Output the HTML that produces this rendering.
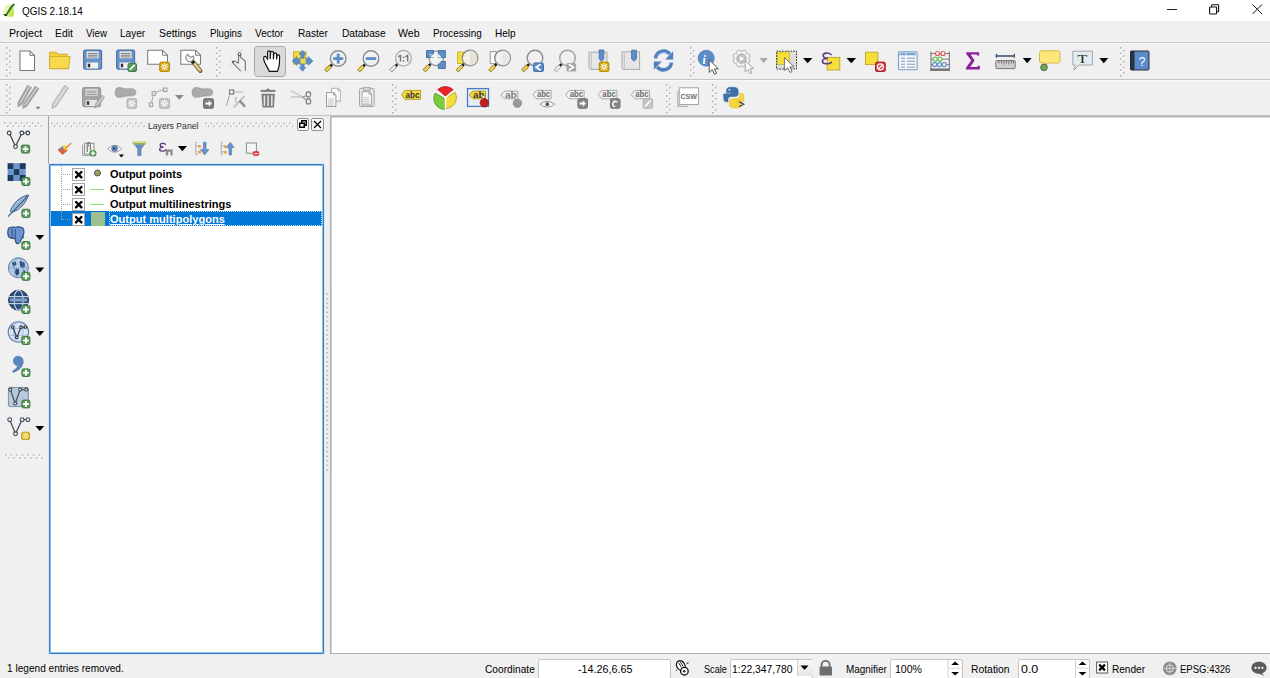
<!DOCTYPE html>
<html><head><meta charset="utf-8"><title>QGIS 2.18.14</title>
<style>
html,body{margin:0;padding:0;}
body{width:1270px;height:678px;overflow:hidden;position:relative;background:#f0f0f0;font-family:"Liberation Sans", sans-serif;}
#root{position:absolute;left:0;top:0;width:1270px;height:678px;overflow:hidden;background:#f0f0f0;}
.a{position:absolute;}
.t{position:absolute;white-space:nowrap;line-height:1;}
svg{overflow:visible}
</style></head><body><div id="root">
<div class="a" style="left:0px;top:0px;width:1270px;height:21px;background:#fff"></div><div class="t" style="left:21.5px;top:5.1px;font-size:11.7px;color:#000;transform:scaleX(0.8507);transform-origin:0 0;">QGIS 2.18.14</div><div class="a" style="left:1167px;top:9px;width:10px;height:1px;background:#222"></div><svg class="a" style="left:1209px;top:4px" width="11" height="11"><rect x="0.6" y="3" width="7" height="7" rx="0.8" fill="none" stroke="#111" stroke-width="1.1"/><path d="M2.6 2.8V1.6Q2.6 0.8 3.4 0.8H8.8Q9.6 0.8 9.6 1.6V7Q9.6 7.8 8.8 7.8H7.8" fill="none" stroke="#111" stroke-width="1.1"/></svg><svg class="a" style="left:1252px;top:4px" width="11" height="11"><path d="M0.5 0.5L10 10M10 0.5L0.5 10" stroke="#111" stroke-width="1"/></svg><div class="a" style="left:0px;top:21px;width:1270px;height:21px;background:#f0f0f0"></div><div class="a" style="left:0px;top:41px;width:1270px;height:1px;background:#f7f7f7"></div><div class="a" style="left:0px;top:42px;width:1270px;height:1px;background:#c4c4c4"></div><div class="a" style="left:0px;top:43px;width:1270px;height:1px;background:#f7f7f7"></div><div class="t" style="left:8.8px;top:27.99px;font-size:11px;color:#000;transform:scaleX(0.9693);transform-origin:0 0;">Project</div><div class="t" style="left:54.7px;top:27.99px;font-size:11px;color:#000;transform:scaleX(0.9384);transform-origin:0 0;">Edit</div><div class="t" style="left:85.6px;top:27.99px;font-size:11px;color:#000;transform:scaleX(0.8877);transform-origin:0 0;">View</div><div class="t" style="left:120.4px;top:27.99px;font-size:11px;color:#000;transform:scaleX(0.9153);transform-origin:0 0;">Layer</div><div class="t" style="left:159.4px;top:27.99px;font-size:11px;color:#000;transform:scaleX(0.9409);transform-origin:0 0;">Settings</div><div class="t" style="left:210px;top:27.99px;font-size:11px;color:#000;transform:scaleX(0.8814);transform-origin:0 0;">Plugins</div><div class="t" style="left:255px;top:27.99px;font-size:11px;color:#000;transform:scaleX(0.9106);transform-origin:0 0;">Vector</div><div class="t" style="left:297.5px;top:27.99px;font-size:11px;color:#000;transform:scaleX(0.9196);transform-origin:0 0;">Raster</div><div class="t" style="left:341.6px;top:27.99px;font-size:11px;color:#000;transform:scaleX(0.9258);transform-origin:0 0;">Database</div><div class="t" style="left:398.2px;top:27.99px;font-size:11px;color:#000;transform:scaleX(0.9589);transform-origin:0 0;">Web</div><div class="t" style="left:433px;top:27.99px;font-size:11px;color:#000;transform:scaleX(0.8949);transform-origin:0 0;">Processing</div><div class="t" style="left:495.2px;top:27.99px;font-size:11px;color:#000;transform:scaleX(0.9061);transform-origin:0 0;">Help</div><div class="a" style="left:0px;top:79px;width:1270px;height:1px;background:#c4c4c4"></div><div class="a" style="left:0px;top:80px;width:1270px;height:1px;background:#f7f7f7"></div><div class="a" style="left:0px;top:115px;width:1270px;height:1px;background:#c4c4c4"></div><div class="a" style="left:330px;top:116px;width:940px;height:538px;background:#fff;border-left:1px solid #b0b0b0;border-top:1px solid #b0b0b0;border-bottom:1px solid #b0b0b0;box-sizing:border-box"></div><div class="a" style="left:331px;top:117px;width:939px;height:1px;background:#dedede"></div><div class="a" style="left:331px;top:117px;width:1px;height:536px;background:#d0d0d0"></div><div class="a" style="left:48px;top:116px;width:1px;height:538px;background:#a0a0a0"></div><div class="t" style="left:148.3px;top:120.77px;font-size:9.6px;color:#333;transform:scaleX(0.9000);transform-origin:0 0;">Layers Panel</div><div class="a" style="left:297px;top:118px;width:10px;height:11px;border:1px solid #909090;border-radius:2px;background:#fafafa"></div><svg class="a" style="left:299px;top:120px" width="8" height="8"><rect x="0.75" y="3.25" width="4.5" height="4" fill="none" stroke="#000" stroke-width="1.5"/><path d="M2.75 3V0.75H7.25V5.25H5.25" fill="none" stroke="#000" stroke-width="1.5"/></svg><div class="a" style="left:310.5px;top:118px;width:11px;height:11px;border:1px solid #909090;border-radius:2px;background:#fafafa"></div><svg class="a" style="left:312.5px;top:120px" width="9" height="9"><path d="M1 1L8 8M8 1L1 8" stroke="#000" stroke-width="1.3"/></svg><div class="a" style="left:49px;top:164px;width:275px;height:490px;box-sizing:border-box;border:1px solid #3a7cb6;box-shadow:inset 0 0 0 1px #8fc0f0, 0 0 0 1px #d6e8fa;background:#fff;border-radius:1px"></div><div class="a" style="left:51px;top:211px;width:271px;height:15px;background:#0078d7"></div><div class="a" style="left:109px;top:211px;width:213px;height:15px;box-sizing:border-box;border:1px dotted #cfe4f8"></div><div class="a" style="left:61px;top:166px;width:0;height:15px;border-left:1px dotted #a0a0a0"></div><div class="a" style="left:61px;top:174px;width:9px;height:0;border-top:1px dotted #a0a0a0"></div><div class="a" style="left:72px;top:168px;width:11px;height:11px;border:1px solid #a4a4a4;background:#fff"></div><svg class="a" style="left:74.5px;top:170.5px" width="8" height="8"><path d="M1 1L6.4 6.4M6.4 1L1 6.4" stroke="#000" stroke-width="2.4" stroke-linecap="round"/></svg><svg class="a" style="left:93px;top:169px" width="9" height="9"><circle cx="4.5" cy="4" r="3" fill="#9aa55a" stroke="#555" stroke-width="1"/></svg><div class="t" style="left:110px;top:169.21px;font-size:10.5px;color:#000;font-weight:bold;transform:scaleX(1.0461);transform-origin:0 0;">Output points</div><div class="a" style="left:61px;top:181px;width:0;height:15px;border-left:1px dotted #a0a0a0"></div><div class="a" style="left:61px;top:189px;width:9px;height:0;border-top:1px dotted #a0a0a0"></div><div class="a" style="left:72px;top:183px;width:11px;height:11px;border:1px solid #a4a4a4;background:#fff"></div><svg class="a" style="left:74.5px;top:185.5px" width="8" height="8"><path d="M1 1L6.4 6.4M6.4 1L1 6.4" stroke="#000" stroke-width="2.4" stroke-linecap="round"/></svg><div class="a" style="left:90px;top:189px;width:14px;height:1px;background:#8fdc7a"></div><div class="t" style="left:110px;top:184.21px;font-size:10.5px;color:#000;font-weight:bold;transform:scaleX(1.0449);transform-origin:0 0;">Output lines</div><div class="a" style="left:61px;top:196px;width:0;height:15px;border-left:1px dotted #a0a0a0"></div><div class="a" style="left:61px;top:204px;width:9px;height:0;border-top:1px dotted #a0a0a0"></div><div class="a" style="left:72px;top:198px;width:11px;height:11px;border:1px solid #a4a4a4;background:#fff"></div><svg class="a" style="left:74.5px;top:200.5px" width="8" height="8"><path d="M1 1L6.4 6.4M6.4 1L1 6.4" stroke="#000" stroke-width="2.4" stroke-linecap="round"/></svg><div class="a" style="left:90px;top:204px;width:14px;height:1px;background:#8fdc7a"></div><div class="t" style="left:110px;top:199.21px;font-size:10.5px;color:#000;font-weight:bold;transform:scaleX(1.0511);transform-origin:0 0;">Output multilinestrings</div><div class="a" style="left:61px;top:211px;width:0;height:8px;border-left:1px dotted #a0a0a0"></div><div class="a" style="left:61px;top:219px;width:9px;height:0;border-top:1px dotted #a0a0a0"></div><div class="a" style="left:72px;top:213px;width:11px;height:11px;border:1px solid #a4a4a4;background:#fff"></div><svg class="a" style="left:74.5px;top:215.5px" width="8" height="8"><path d="M1 1L6.4 6.4M6.4 1L1 6.4" stroke="#000" stroke-width="2.4" stroke-linecap="round"/></svg><div class="a" style="left:91px;top:212px;width:14px;height:14px;background:#9ec08e"></div><div class="t" style="left:110px;top:214.21px;font-size:10.5px;color:#fff;font-weight:bold;transform:scaleX(1.0525);transform-origin:0 0;text-decoration:underline;">Output multipolygons</div><div class="t" style="left:6.6px;top:663.09px;font-size:11px;color:#000;transform:scaleX(0.9183);transform-origin:0 0;">1 legend entries removed.</div><div class="t" style="left:485px;top:663.99px;font-size:11px;color:#000;transform:scaleX(0.9252);transform-origin:0 0;">Coordinate</div><div class="a" style="left:538px;top:659px;width:133px;height:20px;box-sizing:border-box;border:1px solid #c4c4c4;border-radius:2px;background:#fff"></div><div class="t" style="left:578px;top:663.99px;font-size:11px;color:#000;transform:scaleX(0.9774);transform-origin:0 0;">-14.26,6.65</div><div class="t" style="left:704px;top:663.99px;font-size:11px;color:#000;transform:scaleX(0.8281);transform-origin:0 0;">Scale</div><div class="a" style="left:730px;top:659px;width:83px;height:20px;box-sizing:border-box;border:1px solid #c4c4c4;border-radius:2px;background:#fff"></div><div class="a" style="left:797px;top:660px;width:15px;height:16px;background:linear-gradient(#f8f8f8,#e6e6e6);border-left:1px solid #d0d0d0"></div><svg class="a" style="left:800px;top:665px" width="9" height="6"><path d="M0.5 0.5H8.5L4.5 5z" fill="#000"/></svg><div class="t" style="left:732.4px;top:663.99px;font-size:11px;color:#000;transform:scaleX(0.9403);transform-origin:0 0;">1:22,347,780</div><div class="t" style="left:845.8px;top:663.99px;font-size:11px;color:#000;transform:scaleX(0.9017);transform-origin:0 0;">Magnifier</div><div class="a" style="left:890px;top:659px;width:73px;height:20px;box-sizing:border-box;border:1px solid #c4c4c4;border-radius:2px;background:#fff"></div><div class="t" style="left:894.8px;top:663.99px;font-size:11px;color:#000;transform:scaleX(0.9595);transform-origin:0 0;">100%</div><div class="t" style="left:970.7px;top:663.99px;font-size:11px;color:#000;transform:scaleX(0.9418);transform-origin:0 0;">Rotation</div><div class="a" style="left:1018px;top:659px;width:72px;height:20px;box-sizing:border-box;border:1px solid #c4c4c4;border-radius:2px;background:#fff"></div><div class="t" style="left:1021px;top:663.99px;font-size:11px;color:#000;transform:scaleX(1.1309);transform-origin:0 0;">0.0</div><div class="t" style="left:1111.8px;top:663.99px;font-size:11px;color:#000;transform:scaleX(0.9147);transform-origin:0 0;">Render</div><div class="t" style="left:1180px;top:663.99px;font-size:11px;color:#000;transform:scaleX(0.8676);transform-origin:0 0;">EPSG:4326</div><svg class="a" style="left:0;top:0;pointer-events:none" width="1270" height="678" viewBox="0 0 1270 678"><rect x="6.8" y="47.8" width="1.6" height="1.6" fill="#ffffff"/><rect x="6" y="47" width="1.6" height="1.6" fill="#b2b2b2"/><rect x="9.8" y="50.599999999999994" width="1.6" height="1.6" fill="#ffffff"/><rect x="9" y="49.8" width="1.6" height="1.6" fill="#b2b2b2"/><rect x="6.8" y="53.39999999999999" width="1.6" height="1.6" fill="#ffffff"/><rect x="6" y="52.599999999999994" width="1.6" height="1.6" fill="#b2b2b2"/><rect x="9.8" y="56.19999999999999" width="1.6" height="1.6" fill="#ffffff"/><rect x="9" y="55.39999999999999" width="1.6" height="1.6" fill="#b2b2b2"/><rect x="6.8" y="58.999999999999986" width="1.6" height="1.6" fill="#ffffff"/><rect x="6" y="58.19999999999999" width="1.6" height="1.6" fill="#b2b2b2"/><rect x="9.8" y="61.79999999999998" width="1.6" height="1.6" fill="#ffffff"/><rect x="9" y="60.999999999999986" width="1.6" height="1.6" fill="#b2b2b2"/><rect x="6.8" y="64.59999999999998" width="1.6" height="1.6" fill="#ffffff"/><rect x="6" y="63.79999999999998" width="1.6" height="1.6" fill="#b2b2b2"/><rect x="9.8" y="67.39999999999998" width="1.6" height="1.6" fill="#ffffff"/><rect x="9" y="66.59999999999998" width="1.6" height="1.6" fill="#b2b2b2"/><rect x="6.8" y="70.19999999999997" width="1.6" height="1.6" fill="#ffffff"/><rect x="6" y="69.39999999999998" width="1.6" height="1.6" fill="#b2b2b2"/><rect x="9.8" y="72.99999999999997" width="1.6" height="1.6" fill="#ffffff"/><rect x="9" y="72.19999999999997" width="1.6" height="1.6" fill="#b2b2b2"/><rect x="6.8" y="75.79999999999997" width="1.6" height="1.6" fill="#ffffff"/><rect x="6" y="74.99999999999997" width="1.6" height="1.6" fill="#b2b2b2"/><path d="M20.0 50.9H30L34.5 55.4V70.5H20.0Z" fill="#fff" stroke="#767676" stroke-width="1.05"/><path d="M30 50.9V55.4H34.5" fill="none" stroke="#767676" stroke-width="1"/><path d="M49.5 52.2H56.5L58.2 54.2H67.5V57H49.5Z" fill="#f2cf3c" stroke="#d1ad2e" stroke-width="1"/><path d="M49.5 56.5H70L68.5 68.6H49.5Z" fill="#f9d94c" stroke="#d4b030" stroke-width="1.1"/><rect x="83.6" y="50.1" width="18" height="19" rx="2" fill="#6893c8" stroke="#4a70a4" stroke-width="1.1"/><rect x="86.6" y="51.3" width="12" height="7" fill="#e4e4e4"/><rect x="87.8" y="53.1" width="9.6" height="0.9" fill="#777"/><rect x="87.8" y="54.8" width="9.6" height="0.9" fill="#777"/><rect x="87.8" y="56.5" width="9.6" height="0.9" fill="#777"/><rect x="86.6" y="62.5" width="11.5" height="6" fill="#f2f2f2"/><rect x="87.8" y="63.7" width="2.4" height="3.6" fill="#333"/><rect x="116.6" y="50.1" width="18" height="19" rx="2" fill="#6893c8" stroke="#4a70a4" stroke-width="1.1"/><rect x="119.6" y="51.3" width="12" height="7" fill="#e4e4e4"/><rect x="120.8" y="53.1" width="9.6" height="0.9" fill="#777"/><rect x="120.8" y="54.8" width="9.6" height="0.9" fill="#777"/><rect x="120.8" y="56.5" width="9.6" height="0.9" fill="#777"/><rect x="119.6" y="62.5" width="11.5" height="6" fill="#f2f2f2"/><rect x="120.8" y="63.7" width="2.4" height="3.6" fill="#333"/><rect x="128.0" y="63.3" width="8.5" height="8.2" rx="1.5" fill="#5b9a5e" stroke="#3f7a44" stroke-width="1"/><line x1="129.8" y1="69.6" x2="134.8" y2="64.8" stroke="#fff" stroke-width="1.6"/><path d="M147.7 50.2H162.5L167.5 55.2V64.3H147.7Z" fill="#fff" stroke="#7a7a7a" stroke-width="1.05"/><path d="M162.5 50.2V55.2H167.5" fill="none" stroke="#7a7a7a" stroke-width="1"/><rect x="159.7" y="62.1" width="9.8" height="9.4" rx="1.5" fill="#d6a914" stroke="#b48b06" stroke-width="1"/><circle cx="164.6" cy="66.8" r="1.61" fill="none" stroke="#fff" stroke-width="1.2"/><line x1="167.07" y1="66.80" x2="168.24" y2="66.80" stroke="#fff" stroke-width="1.1"/><line x1="166.35" y1="68.55" x2="167.17" y2="69.37" stroke="#fff" stroke-width="1.1"/><line x1="164.60" y1="69.27" x2="164.60" y2="70.44" stroke="#fff" stroke-width="1.1"/><line x1="162.85" y1="68.55" x2="162.03" y2="69.37" stroke="#fff" stroke-width="1.1"/><line x1="162.13" y1="66.80" x2="160.96" y2="66.80" stroke="#fff" stroke-width="1.1"/><line x1="162.85" y1="65.05" x2="162.03" y2="64.23" stroke="#fff" stroke-width="1.1"/><line x1="164.60" y1="64.33" x2="164.60" y2="63.16" stroke="#fff" stroke-width="1.1"/><line x1="166.35" y1="65.05" x2="167.17" y2="64.23" stroke="#fff" stroke-width="1.1"/><path d="M180.8 50.2H195.5L200.5 55.2V64.3H180.8Z" fill="#fff" stroke="#7a7a7a" stroke-width="1.05"/><path d="M195.5 50.2V55.2H200.5" fill="none" stroke="#7a7a7a" stroke-width="1"/><line x1="193.4" y1="62.4" x2="200.4" y2="70.8" stroke="#6a5e2a" stroke-width="4.2" stroke-linecap="round"/><line x1="193.8" y1="62.9" x2="200" y2="70.3" stroke="#e4d28a" stroke-width="2.5" stroke-linecap="round"/><line x1="191.6" y1="60.2" x2="194" y2="63.2" stroke="#222" stroke-width="3.4"/><path d="M187.8 54.4A3.9 3.9 0 1 0 193.3 56L191.2 57.2L189.4 56.4Z" fill="#f2f2f2" stroke="#8a8a8a" stroke-width="1.1" stroke-linejoin="round"/><rect x="216.8" y="47.8" width="1.6" height="1.6" fill="#ffffff"/><rect x="216" y="47" width="1.6" height="1.6" fill="#b2b2b2"/><rect x="219.8" y="50.599999999999994" width="1.6" height="1.6" fill="#ffffff"/><rect x="219" y="49.8" width="1.6" height="1.6" fill="#b2b2b2"/><rect x="216.8" y="53.39999999999999" width="1.6" height="1.6" fill="#ffffff"/><rect x="216" y="52.599999999999994" width="1.6" height="1.6" fill="#b2b2b2"/><rect x="219.8" y="56.19999999999999" width="1.6" height="1.6" fill="#ffffff"/><rect x="219" y="55.39999999999999" width="1.6" height="1.6" fill="#b2b2b2"/><rect x="216.8" y="58.999999999999986" width="1.6" height="1.6" fill="#ffffff"/><rect x="216" y="58.19999999999999" width="1.6" height="1.6" fill="#b2b2b2"/><rect x="219.8" y="61.79999999999998" width="1.6" height="1.6" fill="#ffffff"/><rect x="219" y="60.999999999999986" width="1.6" height="1.6" fill="#b2b2b2"/><rect x="216.8" y="64.59999999999998" width="1.6" height="1.6" fill="#ffffff"/><rect x="216" y="63.79999999999998" width="1.6" height="1.6" fill="#b2b2b2"/><rect x="219.8" y="67.39999999999998" width="1.6" height="1.6" fill="#ffffff"/><rect x="219" y="66.59999999999998" width="1.6" height="1.6" fill="#b2b2b2"/><rect x="216.8" y="70.19999999999997" width="1.6" height="1.6" fill="#ffffff"/><rect x="216" y="69.39999999999998" width="1.6" height="1.6" fill="#b2b2b2"/><rect x="219.8" y="72.99999999999997" width="1.6" height="1.6" fill="#ffffff"/><rect x="219" y="72.19999999999997" width="1.6" height="1.6" fill="#b2b2b2"/><rect x="216.8" y="75.79999999999997" width="1.6" height="1.6" fill="#ffffff"/><rect x="216" y="74.99999999999997" width="1.6" height="1.6" fill="#b2b2b2"/><path d="M240.8 71.2L234 64.2Q231.8 62 233.4 61.2Q234.4 60.8 236 61.8L238.4 63.2L238.6 54.8" fill="none" stroke="#7a7a7a" stroke-width="1.2" stroke-linejoin="round"/><path d="M240.6 55.2V57.6L244.4 60.2Q245.4 61 245.4 62.6V70.8" fill="none" stroke="#7a7a7a" stroke-width="1.2" stroke-linejoin="round"/><circle cx="239.5" cy="54.2" r="1.4" fill="#fff" stroke="#555" stroke-width="1.1"/><circle cx="232.8" cy="61.8" r="1.1" fill="#555"/><path d="M240.8 51L241.8 49.6M236.6 51.6L236 50.6M230.8 64.6L230 65.6" stroke="#b0b0b0" stroke-width="0.8"/><rect x="254.5" y="46.5" width="31" height="30" rx="3" fill="#dadada" stroke="#a8a8a8" stroke-width="1"/><path d="M269.4 71.4L265 63C263.6 60 263 57.6 264.4 56.6C265.6 55.8 266.8 57.2 267.6 59.4L267.6 52.2C267.6 50.4 270.2 50.4 270.2 52.2L270.2 58.6L270.6 52.8C270.8 51 273.2 51 273.4 52.8L273.4 58.8L273.8 54C274 52.4 276.4 52.4 276.6 54.2L276.6 59L277 56.2C277.2 54.4 279.6 54.6 279.6 56.4L279.4 64C279.2 67 278.2 69.2 277.4 71.4Z" fill="#fff" stroke="#111" stroke-width="1.2" stroke-linejoin="round"/><rect x="293.5" y="51.8" width="12.5" height="12.2" fill="#f5dc3c" stroke="#c9ad2a" stroke-width="1"/><path d="M302.5 50.3L306 54.3H304.1V58.4H308.2V56.5L313 61L308.2 65.5V63.6H304.1V67.3H306L302.5 71.3L299 67.3H300.9V63.6H296.8V65.5L292 61L296.8 56.5V58.4H300.9V54.3H299Z" fill="#5b8dc9" stroke="#4e7cb6" stroke-width="0.6"/><rect x="300.5" y="58.6" width="5.2" height="5" fill="#f5dc3c"/><line x1="330.36034076151907" y1="66.21620003787493" x2="325.5" y2="71" stroke="#8a7a20" stroke-width="3.8" stroke-linecap="butt"/><line x1="330.36034076151907" y1="66.21620003787493" x2="325.9276177766444" y2="70.57911636157046" stroke="#f7dc4a" stroke-width="2.2" stroke-linecap="butt"/><line x1="332.14208149753745" y1="64.46251821108517" x2="330.36034076151907" y2="66.21620003787493" stroke="#222" stroke-width="2.6"/><circle cx="338.2" cy="58.5" r="7.8" fill="#f0f0f0" stroke="#8c8c8c" stroke-width="1.4"/><rect x="333.2" y="57.2" width="10" height="2.8" fill="#5b8dc9"/><rect x="336.8" y="53.6" width="2.8" height="10" fill="#5b8dc9"/><line x1="363.22182540694797" y1="66.27817459305203" x2="358.5" y2="71" stroke="#8a7a20" stroke-width="3.8" stroke-linecap="butt"/><line x1="363.22182540694797" y1="66.27817459305203" x2="358.9242640687119" y2="70.57573593128807" stroke="#f7dc4a" stroke-width="2.2" stroke-linecap="butt"/><line x1="364.98959235991435" y1="64.51040764008566" x2="363.22182540694797" y2="66.27817459305203" stroke="#222" stroke-width="2.6"/><circle cx="371" cy="58.5" r="7.8" fill="#f0f0f0" stroke="#8c8c8c" stroke-width="1.4"/><rect x="365.8" y="57.2" width="10.4" height="2.8" fill="#5b8dc9"/><line x1="395.6315656624729" y1="65.98685508358419" x2="390.5" y2="71" stroke="#8e8e8e" stroke-width="3.8" stroke-linecap="butt"/><line x1="395.6315656624729" y1="65.98685508358419" x2="390.9291873275015" y2="70.58071699544087" stroke="#f4f4f4" stroke-width="2.2" stroke-linecap="butt"/><line x1="397.41984619372903" y1="64.23984256458778" x2="395.6315656624729" y2="65.98685508358419" stroke="#222" stroke-width="2.6"/><circle cx="403.5" cy="58.3" r="7.8" fill="#f0f0f0" stroke="#b0b0b0" stroke-width="1.4"/><path d="M398 56.2L400 54.8H401.2V61.6H399.8V56.8L398.4 57.6Z" fill="#707070"/><rect x="402.8" y="56.6" width="1.5" height="1.5" fill="#707070"/><rect x="402.8" y="60.1" width="1.5" height="1.5" fill="#707070"/><path d="M405.2 56.2L407.2 54.8H408.4V61.6H407V56.8L405.6 57.6Z" fill="#707070"/><line x1="429.0056324016172" y1="65.71297520160853" x2="424" y2="70.8" stroke="#8a7a20" stroke-width="3.8" stroke-linecap="butt"/><line x1="429.0056324016172" y1="65.71297520160853" x2="424.4208288999067" y2="70.37232835375335" stroke="#f7dc4a" stroke-width="2.2" stroke-linecap="butt"/><line x1="430.7590861512285" y1="63.93101000891417" x2="429.0056324016172" y2="65.71297520160853" stroke="#222" stroke-width="2.6"/><circle cx="436.3" cy="58.3" r="7.2" fill="#f4f4f4" stroke="#9a9a9a" stroke-width="1.4"/><rect x="426.5" y="50.6" width="7" height="7" fill="#5f8dc6" stroke="#3f6ba4" stroke-width="0.9"/><rect x="438.3" y="50.6" width="7" height="7" fill="#5f8dc6" stroke="#3f6ba4" stroke-width="0.9"/><rect x="438.3" y="61.4" width="7" height="7" fill="#5f8dc6" stroke="#3f6ba4" stroke-width="0.9"/><path d="M434 53.6V57.6H430Z" fill="#f4f4f4"/><path d="M429.4 54.4L433 55.6" stroke="#f4f4f4" stroke-width="0.8"/><path d="M437.8 53.6V57.6H441.8Z" fill="#f4f4f4"/><path d="M437.8 64.6V60.6H441.8Z" fill="#f4f4f4"/><rect x="457.5" y="52" width="6" height="11.5" fill="#f3df3a" stroke="#c4aa28" stroke-width="0.8"/><line x1="462.22182540694797" y1="65.77817459305203" x2="457" y2="71" stroke="#8a7a20" stroke-width="3.8" stroke-linecap="butt"/><line x1="462.22182540694797" y1="65.77817459305203" x2="457.4242640687119" y2="70.57573593128807" stroke="#f7dc4a" stroke-width="2.2" stroke-linecap="butt"/><line x1="463.98959235991435" y1="64.01040764008566" x2="462.22182540694797" y2="65.77817459305203" stroke="#222" stroke-width="2.6"/><circle cx="470" cy="58" r="7.8" fill="#f2f0e6" stroke="#8c8c8c" stroke-width="1.4"/><path d="M470 50.6A7.4 7.4 0 0 1 470 65.4Z" fill="#e4e2d8"/><rect x="490.2" y="51.6" width="6" height="12" fill="#fafafa" stroke="#9a9a9a" stroke-width="1"/><line x1="494.79208128070564" y1="65.74831628632263" x2="489.5" y2="71" stroke="#8a7a20" stroke-width="3.8" stroke-linecap="butt"/><line x1="494.79208128070564" y1="65.74831628632263" x2="489.92588647559785" y2="70.57736456620059" stroke="#f7dc4a" stroke-width="2.2" stroke-linecap="butt"/><line x1="496.56660826236345" y1="63.9873353121584" x2="494.79208128070564" y2="65.74831628632263" stroke="#222" stroke-width="2.6"/><circle cx="502.6" cy="58" r="7.8" fill="#f0f0f0" stroke="#8c8c8c" stroke-width="1.4"/><path d="M502.6 50.6A7.4 7.4 0 0 1 502.6 65.4Z" fill="#e6e6e6"/><line x1="527.3758041212303" y1="65.92916371392042" x2="522.5" y2="71" stroke="#8a7a20" stroke-width="3.8" stroke-linecap="butt"/><line x1="527.3758041212303" y1="65.92916371392042" x2="522.915865229751" y2="70.56750016105889" stroke="#f7dc4a" stroke-width="2.2" stroke-linecap="butt"/><line x1="529.1085759118598" y1="64.12708105166577" x2="527.3758041212303" y2="65.92916371392042" stroke="#222" stroke-width="2.6"/><circle cx="535" cy="58" r="7.8" fill="#f0f0f0" stroke="#8c8c8c" stroke-width="1.4"/><rect x="533.5" y="62.9" width="10" height="8.6" rx="1.5" fill="#5b8bc8" stroke="#4673ad" stroke-width="1"/><path d="M540.6 64.2L536 67.2L540.6 70.2" fill="none" stroke="#fff" stroke-width="1.7"/><line x1="559.8758041212303" y1="65.92916371392042" x2="555" y2="71" stroke="#a0a0a0" stroke-width="3.8" stroke-linecap="butt"/><line x1="559.8758041212303" y1="65.92916371392042" x2="555.415865229751" y2="70.56750016105889" stroke="#f4f4f4" stroke-width="2.2" stroke-linecap="butt"/><line x1="561.6085759118598" y1="64.12708105166577" x2="559.8758041212303" y2="65.92916371392042" stroke="#222" stroke-width="2.6"/><circle cx="567.5" cy="58" r="7.8" fill="#f0f0f0" stroke="#a0a0a0" stroke-width="1.4"/><rect x="566.5" y="62.9" width="9.6" height="8.6" rx="1.5" fill="#a6a6a6"/><path d="M568.8 64.2L573.4 67.2L568.8 70.2" fill="none" stroke="#fff" stroke-width="1.7"/><path d="M589 52.2H607V69.4H591A2 2 0 0 1 589 67.4Z" fill="#e6e6e6" stroke="#a8a8a8" stroke-width="1"/><path d="M591.4 52.2V69.4" stroke="#c8c8c8" stroke-width="1.2"/><path d="M599.2 50H603.8V59L601.5 61.2L599.2 59Z" fill="#5b8dc9" stroke="#3f6aa6" stroke-width="0.8"/><rect x="599.3" y="62.1" width="9.6" height="9.4" rx="1.5" fill="#d6a914" stroke="#b48b06" stroke-width="1"/><circle cx="604.1" cy="66.8" r="1.61" fill="none" stroke="#fff" stroke-width="1.2"/><line x1="606.57" y1="66.80" x2="607.74" y2="66.80" stroke="#fff" stroke-width="1.1"/><line x1="605.85" y1="68.55" x2="606.67" y2="69.37" stroke="#fff" stroke-width="1.1"/><line x1="604.10" y1="69.27" x2="604.10" y2="70.44" stroke="#fff" stroke-width="1.1"/><line x1="602.35" y1="68.55" x2="601.53" y2="69.37" stroke="#fff" stroke-width="1.1"/><line x1="601.63" y1="66.80" x2="600.46" y2="66.80" stroke="#fff" stroke-width="1.1"/><line x1="602.35" y1="65.05" x2="601.53" y2="64.23" stroke="#fff" stroke-width="1.1"/><line x1="604.10" y1="64.33" x2="604.10" y2="63.16" stroke="#fff" stroke-width="1.1"/><line x1="605.85" y1="65.05" x2="606.67" y2="64.23" stroke="#fff" stroke-width="1.1"/><path d="M622 51.8H639.6V69.4H624A2 2 0 0 1 622 67.4Z" fill="#e6e6e6" stroke="#a8a8a8" stroke-width="1"/><path d="M624.4 51.8V69.4" stroke="#c8c8c8" stroke-width="1.2"/><path d="M631.6 50.2H636.4V59L634 61.2L631.6 59Z" fill="#5b8dc9" stroke="#3f6aa6" stroke-width="0.8"/><path d="M655.6 58.4A8 8 0 0 1 669.8 54.2" fill="none" stroke="#4f7fbd" stroke-width="3.6"/><path d="M673.2 51.2V59.6H665.2Z" fill="#4f7fbd"/><path d="M671.4 62.6A8 8 0 0 1 657.2 66.8" fill="none" stroke="#4f7fbd" stroke-width="3.6"/><path d="M653.8 69.8V61.4H661.8Z" fill="#4f7fbd"/><path d="M657 57.6A6.6 6.6 0 0 1 668.6 54.8" fill="none" stroke="#8fb2df" stroke-width="1"/><rect x="690.8" y="47.8" width="1.6" height="1.6" fill="#ffffff"/><rect x="690" y="47" width="1.6" height="1.6" fill="#b2b2b2"/><rect x="693.8" y="50.599999999999994" width="1.6" height="1.6" fill="#ffffff"/><rect x="693" y="49.8" width="1.6" height="1.6" fill="#b2b2b2"/><rect x="690.8" y="53.39999999999999" width="1.6" height="1.6" fill="#ffffff"/><rect x="690" y="52.599999999999994" width="1.6" height="1.6" fill="#b2b2b2"/><rect x="693.8" y="56.19999999999999" width="1.6" height="1.6" fill="#ffffff"/><rect x="693" y="55.39999999999999" width="1.6" height="1.6" fill="#b2b2b2"/><rect x="690.8" y="58.999999999999986" width="1.6" height="1.6" fill="#ffffff"/><rect x="690" y="58.19999999999999" width="1.6" height="1.6" fill="#b2b2b2"/><rect x="693.8" y="61.79999999999998" width="1.6" height="1.6" fill="#ffffff"/><rect x="693" y="60.999999999999986" width="1.6" height="1.6" fill="#b2b2b2"/><rect x="690.8" y="64.59999999999998" width="1.6" height="1.6" fill="#ffffff"/><rect x="690" y="63.79999999999998" width="1.6" height="1.6" fill="#b2b2b2"/><rect x="693.8" y="67.39999999999998" width="1.6" height="1.6" fill="#ffffff"/><rect x="693" y="66.59999999999998" width="1.6" height="1.6" fill="#b2b2b2"/><rect x="690.8" y="70.19999999999997" width="1.6" height="1.6" fill="#ffffff"/><rect x="690" y="69.39999999999998" width="1.6" height="1.6" fill="#b2b2b2"/><rect x="693.8" y="72.99999999999997" width="1.6" height="1.6" fill="#ffffff"/><rect x="693" y="72.19999999999997" width="1.6" height="1.6" fill="#b2b2b2"/><rect x="690.8" y="75.79999999999997" width="1.6" height="1.6" fill="#ffffff"/><rect x="690" y="74.99999999999997" width="1.6" height="1.6" fill="#b2b2b2"/><circle cx="706.2" cy="58.2" r="8" fill="#5b8dc9" stroke="#4a78b4" stroke-width="0.8"/><text x="702.6" y="63.5" font-family="Liberation Serif" font-style="italic" font-weight="bold" font-size="12" fill="#fff">i</text><polygon points="709.20,59.80 709.20,72.45 712.19,69.69 714.49,74.29 716.56,73.37 714.38,68.88 718.40,68.77" fill="#fff" stroke="#444" stroke-width="0.9" stroke-linejoin="round"/><circle cx="747.41" cy="61.05" r="2.5" fill="#f2f2f2" stroke="#b4b4b4" stroke-width="1"/><circle cx="743.95" cy="64.51" r="2.5" fill="#f2f2f2" stroke="#b4b4b4" stroke-width="1"/><circle cx="739.05" cy="64.51" r="2.5" fill="#f2f2f2" stroke="#b4b4b4" stroke-width="1"/><circle cx="735.59" cy="61.05" r="2.5" fill="#f2f2f2" stroke="#b4b4b4" stroke-width="1"/><circle cx="735.59" cy="56.15" r="2.5" fill="#f2f2f2" stroke="#b4b4b4" stroke-width="1"/><circle cx="739.05" cy="52.69" r="2.5" fill="#f2f2f2" stroke="#b4b4b4" stroke-width="1"/><circle cx="743.95" cy="52.69" r="2.5" fill="#f2f2f2" stroke="#b4b4b4" stroke-width="1"/><circle cx="747.41" cy="56.15" r="2.5" fill="#f2f2f2" stroke="#b4b4b4" stroke-width="1"/><circle cx="741.5" cy="58.6" r="6.6" fill="#f2f2f2"/><circle cx="741.5" cy="58.6" r="4.6" fill="#c4c4c4" stroke="#a8a8a8" stroke-width="1"/><path d="M740 56.2L744.2 58.6L740 61Z" fill="#fff"/><polygon points="745.20,60.40 745.20,71.95 747.93,69.43 750.03,73.63 751.92,72.79 749.93,68.69 753.60,68.59" fill="#fafafa" stroke="#9a9a9a" stroke-width="0.9" stroke-linejoin="round"/><path d="M759.4 58H768.0L763.6999999999999 63Z" fill="#a8a8a8"/><rect x="776.5" y="51.2" width="20" height="17.8" fill="#dedede" stroke="#333" stroke-width="1" stroke-dasharray="1.6 1.2"/><rect x="777.2" y="52" width="12.5" height="12.4" fill="#f5de36" stroke="#b9a32a" stroke-width="0.6"/><polygon points="784.40,57.40 784.40,70.60 787.52,67.72 789.92,72.52 792.08,71.56 789.80,66.88 794.00,66.76" fill="#fff" stroke="#666" stroke-width="0.9" stroke-linejoin="round"/><path d="M803 58H812.4L807.7 63.2Z" fill="#000"/><rect x="827.2" y="57.4" width="12.6" height="12.6" fill="#f7df3a" stroke="#bca22e" stroke-width="0.9"/><path d="M846.5 58H856.1L851.3 63.2Z" fill="#000"/><rect x="865.5" y="52.2" width="12.4" height="12.4" fill="#f7df3a" stroke="#bfa52c" stroke-width="0.9"/><rect x="875.5" y="62.1" width="9.8" height="9.4" rx="1.5" fill="#d83a3a" stroke="#a82626" stroke-width="1"/><circle cx="880.4" cy="66.8" r="3" fill="none" stroke="#fff" stroke-width="1.3"/><line x1="878.2" y1="69" x2="882.6" y2="64.6" stroke="#fff" stroke-width="1.3"/><rect x="898.5" y="51.8" width="18.6" height="18" rx="1" fill="#f4f8fc" stroke="#7c9ec4" stroke-width="1.1"/><rect x="899" y="52.3" width="17.6" height="3.2" fill="#a9c9ec"/><rect x="901" y="53.5" width="4" height="1" fill="#5580b0"/><rect x="907" y="53.5" width="8" height="1" fill="#5580b0"/><rect x="901" y="57.7" width="4" height="1" fill="#7d96b4"/><rect x="907" y="57.7" width="8" height="1" fill="#7d96b4"/><rect x="901" y="60.7" width="4" height="1" fill="#7d96b4"/><rect x="907" y="60.7" width="8" height="1" fill="#7d96b4"/><rect x="901" y="63.7" width="4" height="1" fill="#7d96b4"/><rect x="907" y="63.7" width="8" height="1" fill="#7d96b4"/><rect x="901" y="66.7" width="4" height="1" fill="#7d96b4"/><rect x="907" y="66.7" width="8" height="1" fill="#7d96b4"/><path d="M931 51.5V69.4M949.3 51.5V69.4" stroke="#777" stroke-width="1.1"/><rect x="930.2" y="68.4" width="19.8" height="2.6" fill="#777"/><line x1="931" y1="53.5" x2="949.5" y2="53.5" stroke="#666" stroke-width="0.8"/><circle cx="937.5" cy="53.5" r="2" fill="#fff" stroke="#e05757" stroke-width="1.2"/><circle cx="943" cy="53.5" r="2" fill="#fff" stroke="#e05757" stroke-width="1.2"/><line x1="931" y1="59.2" x2="949.5" y2="59.2" stroke="#666" stroke-width="0.8"/><circle cx="935.2" cy="59.2" r="2" fill="#fff" stroke="#6bbf5a" stroke-width="1.2"/><circle cx="940" cy="59.2" r="2" fill="#fff" stroke="#6bbf5a" stroke-width="1.2"/><line x1="931" y1="64.6" x2="949.5" y2="64.6" stroke="#666" stroke-width="0.8"/><circle cx="934.6" cy="64.6" r="2" fill="#fff" stroke="#5a8fc8" stroke-width="1.2"/><circle cx="939.4" cy="64.6" r="2" fill="#fff" stroke="#5a8fc8" stroke-width="1.2"/><circle cx="944.2" cy="64.6" r="2" fill="#fff" stroke="#5a8fc8" stroke-width="1.2"/><path d="M966.2 52.2H979.2V55.4H977.2L976.8 54.6H970.6L974.6 60.5L970.2 67H977.2L977.8 65.8H979.8V69.6H966V67.8L971.2 60.6L966.2 53.8Z" fill="#8e1d9c"/><rect x="995.8" y="55.2" width="19.2" height="1.6" fill="#3f5670"/><rect x="995.8" y="53.8" width="1.3" height="4" fill="#3f5670"/><rect x="1013.7" y="53.8" width="1.3" height="4" fill="#3f5670"/><rect x="995.8" y="60.6" width="19.4" height="8" rx="1" fill="#cfcfcf" stroke="#777" stroke-width="1"/><rect x="998.5" y="61" width="0.9" height="2.4" fill="#666"/><rect x="1001" y="61" width="0.9" height="2.4" fill="#666"/><rect x="1003.5" y="61" width="0.9" height="3.5" fill="#666"/><rect x="1006" y="61" width="0.9" height="2.4" fill="#666"/><rect x="1008.5" y="61" width="0.9" height="3.5" fill="#666"/><rect x="1011" y="61" width="0.9" height="2.4" fill="#666"/><rect x="1013" y="61" width="0.9" height="2.4" fill="#666"/><path d="M1022.8 58H1031.6L1027.2 63.2Z" fill="#000"/><path d="M1041.5 50.8H1058A2 2 0 0 1 1060 52.8V61A2 2 0 0 1 1058 63H1048L1045.5 66.5L1045.8 63H1041.5A2 2 0 0 1 1039.5 61V52.8A2 2 0 0 1 1041.5 50.8Z" fill="#fde77a" stroke="#d6b84a" stroke-width="1"/><circle cx="1044" cy="67.4" r="3.3" fill="#6ea35c" stroke="#4e6e44" stroke-width="1"/><path d="M1072.8 51.2H1092.4V65H1079L1073.6 70.4L1075.6 65H1072.8Z" fill="#e4ecf2" stroke="#a0a8ae" stroke-width="1"/><text x="1077.6" y="62.6" font-family="Liberation Serif" font-size="12.5" fill="#222" textLength="9.8" lengthAdjust="spacingAndGlyphs">T</text><path d="M1099.4 58H1108.2L1103.8000000000002 63.2Z" fill="#000"/><rect x="1120.8" y="47.8" width="1.6" height="1.6" fill="#ffffff"/><rect x="1120" y="47" width="1.6" height="1.6" fill="#b2b2b2"/><rect x="1123.8" y="50.599999999999994" width="1.6" height="1.6" fill="#ffffff"/><rect x="1123" y="49.8" width="1.6" height="1.6" fill="#b2b2b2"/><rect x="1120.8" y="53.39999999999999" width="1.6" height="1.6" fill="#ffffff"/><rect x="1120" y="52.599999999999994" width="1.6" height="1.6" fill="#b2b2b2"/><rect x="1123.8" y="56.19999999999999" width="1.6" height="1.6" fill="#ffffff"/><rect x="1123" y="55.39999999999999" width="1.6" height="1.6" fill="#b2b2b2"/><rect x="1120.8" y="58.999999999999986" width="1.6" height="1.6" fill="#ffffff"/><rect x="1120" y="58.19999999999999" width="1.6" height="1.6" fill="#b2b2b2"/><rect x="1123.8" y="61.79999999999998" width="1.6" height="1.6" fill="#ffffff"/><rect x="1123" y="60.999999999999986" width="1.6" height="1.6" fill="#b2b2b2"/><rect x="1120.8" y="64.59999999999998" width="1.6" height="1.6" fill="#ffffff"/><rect x="1120" y="63.79999999999998" width="1.6" height="1.6" fill="#b2b2b2"/><rect x="1123.8" y="67.39999999999998" width="1.6" height="1.6" fill="#ffffff"/><rect x="1123" y="66.59999999999998" width="1.6" height="1.6" fill="#b2b2b2"/><rect x="1120.8" y="70.19999999999997" width="1.6" height="1.6" fill="#ffffff"/><rect x="1120" y="69.39999999999998" width="1.6" height="1.6" fill="#b2b2b2"/><rect x="1123.8" y="72.99999999999997" width="1.6" height="1.6" fill="#ffffff"/><rect x="1123" y="72.19999999999997" width="1.6" height="1.6" fill="#b2b2b2"/><rect x="1120.8" y="75.79999999999997" width="1.6" height="1.6" fill="#ffffff"/><rect x="1120" y="74.99999999999997" width="1.6" height="1.6" fill="#b2b2b2"/><rect x="1130.5" y="51" width="18.5" height="19" rx="1" fill="#5b8ac8" stroke="#25313e" stroke-width="1"/><rect x="1130.5" y="51" width="4" height="19" fill="#27323f"/><text x="1138.6" y="66" font-family="Liberation Sans" font-size="12.5" fill="#fff">?</text><rect x="6.8" y="84.8" width="1.6" height="1.6" fill="#ffffff"/><rect x="6" y="84" width="1.6" height="1.6" fill="#b2b2b2"/><rect x="9.8" y="87.6" width="1.6" height="1.6" fill="#ffffff"/><rect x="9" y="86.8" width="1.6" height="1.6" fill="#b2b2b2"/><rect x="6.8" y="90.39999999999999" width="1.6" height="1.6" fill="#ffffff"/><rect x="6" y="89.6" width="1.6" height="1.6" fill="#b2b2b2"/><rect x="9.8" y="93.19999999999999" width="1.6" height="1.6" fill="#ffffff"/><rect x="9" y="92.39999999999999" width="1.6" height="1.6" fill="#b2b2b2"/><rect x="6.8" y="95.99999999999999" width="1.6" height="1.6" fill="#ffffff"/><rect x="6" y="95.19999999999999" width="1.6" height="1.6" fill="#b2b2b2"/><rect x="9.8" y="98.79999999999998" width="1.6" height="1.6" fill="#ffffff"/><rect x="9" y="97.99999999999999" width="1.6" height="1.6" fill="#b2b2b2"/><rect x="6.8" y="101.59999999999998" width="1.6" height="1.6" fill="#ffffff"/><rect x="6" y="100.79999999999998" width="1.6" height="1.6" fill="#b2b2b2"/><rect x="9.8" y="104.39999999999998" width="1.6" height="1.6" fill="#ffffff"/><rect x="9" y="103.59999999999998" width="1.6" height="1.6" fill="#b2b2b2"/><rect x="6.8" y="107.19999999999997" width="1.6" height="1.6" fill="#ffffff"/><rect x="6" y="106.39999999999998" width="1.6" height="1.6" fill="#b2b2b2"/><rect x="9.8" y="109.99999999999997" width="1.6" height="1.6" fill="#ffffff"/><rect x="9" y="109.19999999999997" width="1.6" height="1.6" fill="#b2b2b2"/><rect x="6.8" y="112.79999999999997" width="1.6" height="1.6" fill="#ffffff"/><rect x="6" y="111.99999999999997" width="1.6" height="1.6" fill="#b2b2b2"/><polygon points="18.00,106.80 21.80,104.35 31.33,87.54 27.67,85.46 18.14,102.28" fill="#a4a4a4" stroke="#9a9a9a" stroke-width="0.9" stroke-linejoin="round"/><line x1="19.97" y1="103.32" x2="29.50" y2="86.50" stroke="#e6e6e6" stroke-width="0.9"/><polygon points="22.80,108.40 26.79,106.28 38.73,88.78 35.27,86.42 23.32,103.91" fill="#a8a8a8" stroke="#9a9a9a" stroke-width="0.9" stroke-linejoin="round"/><line x1="25.06" y1="105.10" x2="37.00" y2="87.60" stroke="#e6e6e6" stroke-width="0.9"/><path d="M35.8 106.8H40.4L38.099999999999994 109.39999999999999Z" fill="#777"/><polygon points="52.20,108.40 56.24,106.28 68.33,88.01 64.67,85.59 52.57,103.85" fill="#cfcfcf" stroke="#a8a8a8" stroke-width="0.9" stroke-linejoin="round"/><line x1="54.41" y1="105.06" x2="66.50" y2="86.80" stroke="#e6e6e6" stroke-width="0.9"/><rect x="82.6" y="87.6" width="18" height="19" rx="2" fill="#a4a4a4" stroke="#999" stroke-width="1.1"/><rect x="85.6" y="88.8" width="12" height="7" fill="#dcdcdc"/><rect x="86.8" y="90.6" width="9.6" height="0.9" fill="#9a9a9a"/><rect x="86.8" y="92.3" width="9.6" height="0.9" fill="#9a9a9a"/><rect x="86.8" y="94.0" width="9.6" height="0.9" fill="#9a9a9a"/><rect x="85.6" y="100" width="11.5" height="6" fill="#e4e4e4"/><rect x="86.8" y="101.2" width="2.4" height="3.6" fill="#333"/><polygon points="94.80,108.00 98.44,105.69 104.60,97.14 102.00,95.26 95.84,103.82" fill="#b4b4b4" stroke="#a0a0a0" stroke-width="0.9" stroke-linejoin="round"/><line x1="97.14" y1="104.75" x2="103.30" y2="96.20" stroke="#e6e6e6" stroke-width="0.9"/><path d="M117.5 87.80000000000001C121 87.0 124 89.0 127 89.0C131 88.60000000000001 136 88.0 135.8 92.60000000000001C135.6 97.0 130 95.60000000000001 126.6 96.0C123 96.80000000000001 120 97.80000000000001 117.2 97.0C114.4 96.0 114.4 89.0 117.5 87.80000000000001Z" fill="#aaaaaa" stroke="#9c9c9c" stroke-width="0.8"/><rect x="127.0" y="98.7" width="9.6" height="9.6" rx="1.5" fill="#c4c4c4" stroke="#b2b2b2" stroke-width="1"/><circle cx="131.8" cy="103.5" r="1.61" fill="none" stroke="#fff" stroke-width="1.2"/><line x1="134.27" y1="103.50" x2="135.44" y2="103.50" stroke="#fff" stroke-width="1.1"/><line x1="133.55" y1="105.25" x2="134.37" y2="106.07" stroke="#fff" stroke-width="1.1"/><line x1="131.80" y1="105.97" x2="131.80" y2="107.14" stroke="#fff" stroke-width="1.1"/><line x1="130.05" y1="105.25" x2="129.23" y2="106.07" stroke="#fff" stroke-width="1.1"/><line x1="129.33" y1="103.50" x2="128.16" y2="103.50" stroke="#fff" stroke-width="1.1"/><line x1="130.05" y1="101.75" x2="129.23" y2="100.93" stroke="#fff" stroke-width="1.1"/><line x1="131.80" y1="101.03" x2="131.80" y2="99.86" stroke="#fff" stroke-width="1.1"/><line x1="133.55" y1="101.75" x2="134.37" y2="100.93" stroke="#fff" stroke-width="1.1"/><path d="M151 104.4L153.8 93.6Q158 90.6 165 89.6" fill="none" stroke="#a0a0a0" stroke-width="0.9"/><rect x="149.2" y="102.8" width="3.6" height="3.6" fill="#e8e8e8" stroke="#9a9a9a" stroke-width="0.9"/><rect x="152.1" y="91.60000000000001" width="3.6" height="3.6" fill="#e8e8e8" stroke="#9a9a9a" stroke-width="0.9"/><rect x="163.39999999999998" y="88.0" width="3.6" height="3.6" fill="#e8e8e8" stroke="#9a9a9a" stroke-width="0.9"/><rect x="159.5" y="98.7" width="10" height="9.6" rx="1.5" fill="#c4c4c4" stroke="#b2b2b2" stroke-width="1"/><circle cx="164.5" cy="103.5" r="1.61" fill="none" stroke="#fff" stroke-width="1.2"/><line x1="166.97" y1="103.50" x2="168.14" y2="103.50" stroke="#fff" stroke-width="1.1"/><line x1="166.25" y1="105.25" x2="167.07" y2="106.07" stroke="#fff" stroke-width="1.1"/><line x1="164.50" y1="105.97" x2="164.50" y2="107.14" stroke="#fff" stroke-width="1.1"/><line x1="162.75" y1="105.25" x2="161.93" y2="106.07" stroke="#fff" stroke-width="1.1"/><line x1="162.03" y1="103.50" x2="160.86" y2="103.50" stroke="#fff" stroke-width="1.1"/><line x1="162.75" y1="101.75" x2="161.93" y2="100.93" stroke="#fff" stroke-width="1.1"/><line x1="164.50" y1="101.03" x2="164.50" y2="99.86" stroke="#fff" stroke-width="1.1"/><line x1="166.25" y1="101.75" x2="167.07" y2="100.93" stroke="#fff" stroke-width="1.1"/><path d="M175 95H183.8L179.4 99.8Z" fill="#8a8a8a"/><path d="M194.5 87.80000000000001C198 87.0 201 89.0 204 89.0C208 88.60000000000001 213 88.0 212.8 92.60000000000001C212.6 97.0 207 95.60000000000001 203.6 96.0C200 96.80000000000001 197 97.80000000000001 194.2 97.0C191.4 96.0 191.4 89.0 194.5 87.80000000000001Z" fill="#aaaaaa" stroke="#9c9c9c" stroke-width="0.8"/><rect x="203.5" y="98.7" width="10" height="9.6" rx="1.5" fill="#7e7e7e" stroke="#6e6e6e" stroke-width="1"/><path d="M205.4 102.4H208.6V100.4L212 103.5L208.6 106.6V104.6H205.4Z" fill="#fff"/><rect x="228.9" y="89.3" width="5.4" height="5.4" fill="#8a8a8a"/><circle cx="231.6" cy="92" r="1.4" fill="#fff"/><line x1="234.3" y1="92" x2="243.6" y2="92" stroke="#b8b8b8" stroke-width="1.1"/><line x1="229.6" y1="95" x2="226.4" y2="106" stroke="#9a9a9a" stroke-width="0.9"/><line x1="233.6" y1="107.4" x2="244.6" y2="96" stroke="#c6c6c6" stroke-width="2.2"/><path d="M237 97.2a2.6 2.6 0 1 0 3.2 3.4" fill="none" stroke="#c4c4c4" stroke-width="1.6"/><line x1="239.6" y1="100.6" x2="245" y2="106.8" stroke="#8e8e8e" stroke-width="2.4"/><rect x="260.6" y="89.9" width="14.9" height="2" fill="#7e7e7e"/><path d="M266 89.9Q268 87.3 270 89.9" fill="#7e7e7e"/><path d="M261.4 93.8H274.8L274 107.6H262.4Z" fill="#7e7e7e"/><rect x="263.65" y="95.4" width="1.5" height="10.6" fill="#e8e8e8"/><rect x="267.35" y="95.4" width="1.5" height="10.6" fill="#e8e8e8"/><rect x="271.05" y="95.4" width="1.5" height="10.6" fill="#e8e8e8"/><path d="M290.8 90.6L304 97.6" stroke="#c6c6c6" stroke-width="1.6"/><path d="M290.8 97L303 96.8" stroke="#c6c6c6" stroke-width="1.6"/><ellipse cx="308.4" cy="94.4" rx="2.2" ry="2.6" fill="none" stroke="#8a8a8a" stroke-width="1.4"/><ellipse cx="308.4" cy="101.4" rx="2.2" ry="2.6" fill="none" stroke="#8a8a8a" stroke-width="1.4"/><path d="M302.6 97.2L306.4 95.6M302.6 97.2L306.4 100" stroke="#9a9a9a" stroke-width="1.2"/><path d="M331.5 88.3H338L340.5 90.8V101.1H331.5Z" fill="#f8f8f8" stroke="#b4b4b4" stroke-width="1.05"/><path d="M338 88.3V90.8H340.5" fill="none" stroke="#b4b4b4" stroke-width="1"/><path d="M326.5 92.5H333.4L335.9 95V106.5H326.5Z" fill="#fafafa" stroke="#a0a0a0" stroke-width="1.05"/><path d="M333.4 92.5V95H335.9" fill="none" stroke="#a0a0a0" stroke-width="1"/><rect x="328" y="98.6" width="6" height="0.8" fill="#b8b8b8"/><rect x="328" y="100.6" width="6" height="0.8" fill="#b8b8b8"/><rect x="328" y="102.6" width="6" height="0.8" fill="#b8b8b8"/><rect x="328" y="104.6" width="6" height="0.8" fill="#b8b8b8"/><rect x="359.5" y="88.4" width="14.6" height="18.2" rx="1" fill="#e8e8e8" stroke="#a4a4a4" stroke-width="1"/><rect x="363.4" y="87.4" width="6.8" height="3" fill="#d4d4d4" stroke="#a4a4a4" stroke-width="0.8"/><path d="M362.1 91.7H369L371.5 94.2V105.1H362.1Z" fill="#fafafa" stroke="#a8a8a8" stroke-width="1.05"/><path d="M369 91.7V94.2H371.5" fill="none" stroke="#a8a8a8" stroke-width="1"/><rect x="363.5" y="97.4" width="6" height="0.8" fill="#b8b8b8"/><rect x="363.5" y="99.4" width="6" height="0.8" fill="#b8b8b8"/><rect x="363.5" y="101.4" width="6" height="0.8" fill="#b8b8b8"/><rect x="363.5" y="103.4" width="6" height="0.8" fill="#b8b8b8"/><rect x="392.8" y="84.8" width="1.6" height="1.6" fill="#ffffff"/><rect x="392" y="84" width="1.6" height="1.6" fill="#b2b2b2"/><rect x="395.8" y="87.6" width="1.6" height="1.6" fill="#ffffff"/><rect x="395" y="86.8" width="1.6" height="1.6" fill="#b2b2b2"/><rect x="392.8" y="90.39999999999999" width="1.6" height="1.6" fill="#ffffff"/><rect x="392" y="89.6" width="1.6" height="1.6" fill="#b2b2b2"/><rect x="395.8" y="93.19999999999999" width="1.6" height="1.6" fill="#ffffff"/><rect x="395" y="92.39999999999999" width="1.6" height="1.6" fill="#b2b2b2"/><rect x="392.8" y="95.99999999999999" width="1.6" height="1.6" fill="#ffffff"/><rect x="392" y="95.19999999999999" width="1.6" height="1.6" fill="#b2b2b2"/><rect x="395.8" y="98.79999999999998" width="1.6" height="1.6" fill="#ffffff"/><rect x="395" y="97.99999999999999" width="1.6" height="1.6" fill="#b2b2b2"/><rect x="392.8" y="101.59999999999998" width="1.6" height="1.6" fill="#ffffff"/><rect x="392" y="100.79999999999998" width="1.6" height="1.6" fill="#b2b2b2"/><rect x="395.8" y="104.39999999999998" width="1.6" height="1.6" fill="#ffffff"/><rect x="395" y="103.59999999999998" width="1.6" height="1.6" fill="#b2b2b2"/><rect x="392.8" y="107.19999999999997" width="1.6" height="1.6" fill="#ffffff"/><rect x="392" y="106.39999999999998" width="1.6" height="1.6" fill="#b2b2b2"/><rect x="395.8" y="109.99999999999997" width="1.6" height="1.6" fill="#ffffff"/><rect x="395" y="109.19999999999997" width="1.6" height="1.6" fill="#b2b2b2"/><rect x="392.8" y="112.79999999999997" width="1.6" height="1.6" fill="#ffffff"/><rect x="392" y="111.99999999999997" width="1.6" height="1.6" fill="#b2b2b2"/><path d="M401.5 94.85000000000001L405 90.4H420.5V99.30000000000001H405Z" fill="#f4dc40" stroke="#b89e26" stroke-width="1"/><text x="405.5" y="97.9" font-family="Liberation Sans" font-weight="bold" font-size="9.4" fill="#333" textLength="14" lengthAdjust="spacingAndGlyphs">abc</text><path d="M445.4 97.6L437.23 90.24A11 11 0 0 1 453.57 90.24Z" fill="#e82626" stroke="#b01c1c" stroke-width="0.9"/><path d="M445.4 97.6L455.11 92.44A11 11 0 0 1 445.78 108.59Z" fill="#f4de3c" stroke="#b8a424" stroke-width="0.9"/><path d="M444.8 98.4L444.42 109.39A11 11 0 0 1 435.09 93.24Z" fill="#7acc3a" stroke="#4e9a22" stroke-width="0.9"/><path d="M445.4 97.6L445.4 109M445.4 97.6L437 90.5M445.4 97.6L453.8 90.5" stroke="#fff" stroke-width="1.6"/><rect x="467.5" y="88.6" width="21" height="17.8" fill="#e8eef6" stroke="#4a7fc8" stroke-width="1.3"/><path d="M469.1 95.0L472.6 91.1H485.5V98.89999999999999H472.6Z" fill="#f2da46" stroke="#b89e26" stroke-width="1"/><text x="473.1" y="97.49999999999999" font-family="Liberation Sans" font-weight="bold" font-size="9.4" fill="#333" textLength="11.399999999999999" lengthAdjust="spacingAndGlyphs">ab</text><rect x="482.2" y="95.4" width="2.2" height="5" fill="#fff" stroke="#777" stroke-width="0.6"/><circle cx="484.3" cy="102.8" r="4.2" fill="#c21f1f" stroke="#8e1414" stroke-width="0.8"/><path d="M501.0 95.0L504.5 91.1H517.8V98.89999999999999H504.5Z" fill="#f2f2f2" stroke="#a8a8a8" stroke-width="1"/><text x="505.0" y="97.49999999999999" font-family="Liberation Sans" font-weight="bold" font-size="9.4" fill="#7a7a7a" textLength="11.8" lengthAdjust="spacingAndGlyphs">ab</text><rect x="515.6" y="96.4" width="2.2" height="4.6" fill="#fff" stroke="#9c9c9c" stroke-width="0.6"/><circle cx="517.4" cy="103.2" r="4.2" fill="#9a9a9a" stroke="#8a8a8a" stroke-width="0.8"/><path d="M532.9 94.60000000000001L536.4 90.4H551.1V98.80000000000001H536.4Z" fill="#f2f2f2" stroke="#a8a8a8" stroke-width="1"/><text x="536.9" y="97.4" font-family="Liberation Sans" font-weight="bold" font-size="9.4" fill="#6a6a6a" textLength="13.2" lengthAdjust="spacingAndGlyphs">abc</text><path d="M540 104.2Q547.4 98.4 554.6 104.2Q547.4 110 540 104.2Z" fill="#fff" stroke="#8a8a8a" stroke-width="0.9"/><circle cx="547.3" cy="104.2" r="1.9" fill="#555"/><path d="M565.7 94.60000000000001L569.2 90.4H584.1V98.80000000000001H569.2Z" fill="#f2f2f2" stroke="#a8a8a8" stroke-width="1"/><text x="569.7" y="97.4" font-family="Liberation Sans" font-weight="bold" font-size="9.4" fill="#6a6a6a" textLength="13.399999999999999" lengthAdjust="spacingAndGlyphs">abc</text><rect x="577.9" y="98.7" width="9.6" height="9.6" rx="1.5" fill="#858585" stroke="#777" stroke-width="1"/><path d="M579.6 102.4H582.8V100.4L586 103.5L582.8 106.6V104.6H579.6Z" fill="#fff"/><path d="M598.3 94.60000000000001L601.8 90.4H616.9V98.80000000000001H601.8Z" fill="#f2f2f2" stroke="#a8a8a8" stroke-width="1"/><text x="602.3" y="97.4" font-family="Liberation Sans" font-weight="bold" font-size="9.4" fill="#6a6a6a" textLength="13.600000000000001" lengthAdjust="spacingAndGlyphs">abc</text><rect x="610.4" y="98.7" width="9.6" height="9.6" rx="1.5" fill="#858585" stroke="#777" stroke-width="1"/><path d="M617.4 102.4A2.6 2.6 0 1 0 615.2 106.6" fill="none" stroke="#fff" stroke-width="1.4"/><path d="M613.2 100.2L616.6 101L614.6 103Z" fill="#fff"/><path d="M631.3 94.60000000000001L634.8 90.4H649.5V98.80000000000001H634.8Z" fill="#f2f2f2" stroke="#a8a8a8" stroke-width="1"/><text x="635.3" y="97.4" font-family="Liberation Sans" font-weight="bold" font-size="9.4" fill="#6a6a6a" textLength="13.2" lengthAdjust="spacingAndGlyphs">abc</text><rect x="643.1" y="98.7" width="9.6" height="9.6" rx="1.5" fill="#c6c6c6" stroke="#b4b4b4" stroke-width="1"/><line x1="645" y1="106.4" x2="650.6" y2="100.6" stroke="#fff" stroke-width="1.5"/><rect x="666.8" y="84.8" width="1.6" height="1.6" fill="#ffffff"/><rect x="666" y="84" width="1.6" height="1.6" fill="#b2b2b2"/><rect x="669.8" y="87.6" width="1.6" height="1.6" fill="#ffffff"/><rect x="669" y="86.8" width="1.6" height="1.6" fill="#b2b2b2"/><rect x="666.8" y="90.39999999999999" width="1.6" height="1.6" fill="#ffffff"/><rect x="666" y="89.6" width="1.6" height="1.6" fill="#b2b2b2"/><rect x="669.8" y="93.19999999999999" width="1.6" height="1.6" fill="#ffffff"/><rect x="669" y="92.39999999999999" width="1.6" height="1.6" fill="#b2b2b2"/><rect x="666.8" y="95.99999999999999" width="1.6" height="1.6" fill="#ffffff"/><rect x="666" y="95.19999999999999" width="1.6" height="1.6" fill="#b2b2b2"/><rect x="669.8" y="98.79999999999998" width="1.6" height="1.6" fill="#ffffff"/><rect x="669" y="97.99999999999999" width="1.6" height="1.6" fill="#b2b2b2"/><rect x="666.8" y="101.59999999999998" width="1.6" height="1.6" fill="#ffffff"/><rect x="666" y="100.79999999999998" width="1.6" height="1.6" fill="#b2b2b2"/><rect x="669.8" y="104.39999999999998" width="1.6" height="1.6" fill="#ffffff"/><rect x="669" y="103.59999999999998" width="1.6" height="1.6" fill="#b2b2b2"/><rect x="666.8" y="107.19999999999997" width="1.6" height="1.6" fill="#ffffff"/><rect x="666" y="106.39999999999998" width="1.6" height="1.6" fill="#b2b2b2"/><rect x="669.8" y="109.99999999999997" width="1.6" height="1.6" fill="#ffffff"/><rect x="669" y="109.19999999999997" width="1.6" height="1.6" fill="#b2b2b2"/><rect x="666.8" y="112.79999999999997" width="1.6" height="1.6" fill="#ffffff"/><rect x="666" y="111.99999999999997" width="1.6" height="1.6" fill="#b2b2b2"/><path d="M677.8 91V106.4H688" fill="none" stroke="#b4b4b4" stroke-width="1.2"/><rect x="679.2" y="87.8" width="19.2" height="16.8" fill="#fff" stroke="#a0a0a0" stroke-width="1"/><text x="680.4" y="99.2" font-family="Liberation Sans" font-weight="bold" font-size="8" fill="#6e6e6e" textLength="16.6" lengthAdjust="spacingAndGlyphs">CSW</text><rect x="712.8" y="84.8" width="1.6" height="1.6" fill="#ffffff"/><rect x="712" y="84" width="1.6" height="1.6" fill="#b2b2b2"/><rect x="715.8" y="87.6" width="1.6" height="1.6" fill="#ffffff"/><rect x="715" y="86.8" width="1.6" height="1.6" fill="#b2b2b2"/><rect x="712.8" y="90.39999999999999" width="1.6" height="1.6" fill="#ffffff"/><rect x="712" y="89.6" width="1.6" height="1.6" fill="#b2b2b2"/><rect x="715.8" y="93.19999999999999" width="1.6" height="1.6" fill="#ffffff"/><rect x="715" y="92.39999999999999" width="1.6" height="1.6" fill="#b2b2b2"/><rect x="712.8" y="95.99999999999999" width="1.6" height="1.6" fill="#ffffff"/><rect x="712" y="95.19999999999999" width="1.6" height="1.6" fill="#b2b2b2"/><rect x="715.8" y="98.79999999999998" width="1.6" height="1.6" fill="#ffffff"/><rect x="715" y="97.99999999999999" width="1.6" height="1.6" fill="#b2b2b2"/><rect x="712.8" y="101.59999999999998" width="1.6" height="1.6" fill="#ffffff"/><rect x="712" y="100.79999999999998" width="1.6" height="1.6" fill="#b2b2b2"/><rect x="715.8" y="104.39999999999998" width="1.6" height="1.6" fill="#ffffff"/><rect x="715" y="103.59999999999998" width="1.6" height="1.6" fill="#b2b2b2"/><rect x="712.8" y="107.19999999999997" width="1.6" height="1.6" fill="#ffffff"/><rect x="712" y="106.39999999999998" width="1.6" height="1.6" fill="#b2b2b2"/><rect x="715.8" y="109.99999999999997" width="1.6" height="1.6" fill="#ffffff"/><rect x="715" y="109.19999999999997" width="1.6" height="1.6" fill="#b2b2b2"/><rect x="712.8" y="112.79999999999997" width="1.6" height="1.6" fill="#ffffff"/><rect x="712" y="111.99999999999997" width="1.6" height="1.6" fill="#b2b2b2"/><path d="M731 87.2C727.4 87.2 726.6 88.8 726.6 90.6V92.8H731.4V93.8H725C722.8 93.8 723.8 95.4 723.8 98.6C723.8 101.4 725 101.8 726.4 101.8H728V99.4C728 97.6 729.4 96.4 731 96.4H735.4C737 96.4 738.2 95.4 738.2 93.8V90.6C738.2 88.8 736.6 87.2 733.8 87.2Z" fill="#3d72a6" stroke="#2d5d8e" stroke-width="0.5"/><circle cx="729.4" cy="89.8" r="0.9" fill="#fff"/><path d="M736.6 108C740.2 108 741 106.4 741 104.6V102.4H736.2V101.4H742.6C744.8 101.4 743.8 99.8 743.8 96.6C743.8 93.8 742.6 93.4 741.2 93.4H739.6V95.8C739.6 97.6 738.2 98.8 736.6 98.8H732.2C730.6 98.8 729.4 99.8 729.4 101.4V104.6C729.4 106.4 731 108 733.8 108Z" fill="#f7d43c" stroke="#d8b42a" stroke-width="0.5"/><path d="M739 101.6L743.8 104.2L739 106.8" fill="none" stroke="#444" stroke-width="1.2"/><rect x="4.8" y="123.2" width="1.6" height="1.6" fill="#ffffff"/><rect x="4" y="122.4" width="1.6" height="1.6" fill="#b8b8b8"/><rect x="7.6" y="126.2" width="1.6" height="1.6" fill="#ffffff"/><rect x="6.8" y="125.4" width="1.6" height="1.6" fill="#b8b8b8"/><rect x="10.4" y="123.2" width="1.6" height="1.6" fill="#ffffff"/><rect x="9.6" y="122.4" width="1.6" height="1.6" fill="#b8b8b8"/><rect x="13.2" y="126.2" width="1.6" height="1.6" fill="#ffffff"/><rect x="12.399999999999999" y="125.4" width="1.6" height="1.6" fill="#b8b8b8"/><rect x="16.0" y="123.2" width="1.6" height="1.6" fill="#ffffff"/><rect x="15.2" y="122.4" width="1.6" height="1.6" fill="#b8b8b8"/><rect x="18.8" y="126.2" width="1.6" height="1.6" fill="#ffffff"/><rect x="18.0" y="125.4" width="1.6" height="1.6" fill="#b8b8b8"/><rect x="21.6" y="123.2" width="1.6" height="1.6" fill="#ffffff"/><rect x="20.8" y="122.4" width="1.6" height="1.6" fill="#b8b8b8"/><rect x="24.400000000000002" y="126.2" width="1.6" height="1.6" fill="#ffffff"/><rect x="23.6" y="125.4" width="1.6" height="1.6" fill="#b8b8b8"/><rect x="27.200000000000003" y="123.2" width="1.6" height="1.6" fill="#ffffff"/><rect x="26.400000000000002" y="122.4" width="1.6" height="1.6" fill="#b8b8b8"/><rect x="30.000000000000004" y="126.2" width="1.6" height="1.6" fill="#ffffff"/><rect x="29.200000000000003" y="125.4" width="1.6" height="1.6" fill="#b8b8b8"/><rect x="32.8" y="123.2" width="1.6" height="1.6" fill="#ffffff"/><rect x="32.0" y="122.4" width="1.6" height="1.6" fill="#b8b8b8"/><rect x="35.599999999999994" y="126.2" width="1.6" height="1.6" fill="#ffffff"/><rect x="34.8" y="125.4" width="1.6" height="1.6" fill="#b8b8b8"/><rect x="38.39999999999999" y="123.2" width="1.6" height="1.6" fill="#ffffff"/><rect x="37.599999999999994" y="122.4" width="1.6" height="1.6" fill="#b8b8b8"/><rect x="41.19999999999999" y="126.2" width="1.6" height="1.6" fill="#ffffff"/><rect x="40.39999999999999" y="125.4" width="1.6" height="1.6" fill="#b8b8b8"/><polyline points="9.2,133 15.5,146.6 21.8,133 27.8,133" fill="none" stroke="#3a4654" stroke-width="1.2"/><circle cx="9.2" cy="133" r="1.9" fill="#f0f0f0" stroke="#3a4654" stroke-width="1.1"/><circle cx="15.5" cy="146.6" r="1.9" fill="#f0f0f0" stroke="#3a4654" stroke-width="1.1"/><circle cx="21.8" cy="133" r="1.9" fill="#f0f0f0" stroke="#3a4654" stroke-width="1.1"/><circle cx="27.8" cy="133" r="1.9" fill="#f0f0f0" stroke="#3a4654" stroke-width="1.1"/><rect x="21.3" y="145.1" width="8.4" height="8" rx="1.5" fill="#5c9a5c" stroke="#3f7842" stroke-width="1"/><rect x="22.5" y="148.2" width="6" height="1.8" fill="#fff"/><rect x="24.6" y="146.1" width="1.8" height="6" fill="#fff"/><rect x="7.6" y="163.2" width="6.1" height="6" fill="#1e3a60"/><rect x="13.6" y="163.2" width="6.1" height="6" fill="#6b96c9"/><rect x="19.6" y="163.2" width="6.1" height="6" fill="#1e3a60"/><rect x="7.6" y="169.1" width="6.1" height="6" fill="#6b96c9"/><rect x="13.6" y="169.1" width="6.1" height="6" fill="#1e3a60"/><rect x="19.6" y="169.1" width="6.1" height="6" fill="#6b96c9"/><rect x="7.6" y="175.0" width="6.1" height="6" fill="#1e3a60"/><rect x="13.6" y="175.0" width="6.1" height="6" fill="#6b96c9"/><rect x="19.6" y="175.0" width="6.1" height="6" fill="#1e3a60"/><rect x="21.9" y="177.5" width="8" height="8" rx="1.5" fill="#5c9a5c" stroke="#3f7842" stroke-width="1"/><rect x="22.9" y="180.6" width="6" height="1.8" fill="#fff"/><rect x="25.0" y="178.5" width="1.8" height="6" fill="#fff"/><path d="M28.6 195C22 196 14.6 201 10.8 209.6C10.2 211 10.4 212.2 11.2 212.4C17.4 211 24.6 206 28.6 195Z" fill="#9cb6d8" stroke="#3d5e86" stroke-width="1"/><path d="M27.4 196.4L8 216.6" stroke="#3d5e86" stroke-width="1.2"/><rect x="21.9" y="209.3" width="8" height="8.2" rx="1.5" fill="#5c9a5c" stroke="#3f7842" stroke-width="1"/><rect x="22.9" y="212.5" width="6" height="1.8" fill="#fff"/><rect x="25.0" y="210.4" width="1.8" height="6" fill="#fff"/><path d="M8.6 228.4C9.6 226.8 13 226.8 15.6 227.2C18 226.6 22.6 226.6 23.4 228.6C24.2 231 23.8 235 22.2 237.4L23.6 237.4L21.6 238.6C21 240.4 20 243.4 17.6 243.6C15.6 243.8 15.4 241 15 238.6L12.6 238.4C9.6 238.2 8 236.6 7.8 233.4C7.6 231.2 7.8 229.6 8.6 228.4Z" fill="#6b94cf" stroke="#2b4c7c" stroke-width="1.1" stroke-linejoin="round"/><path d="M12.2 228.6C11.8 231.6 11.8 234.6 12.4 237.8M15.4 229.2C15 232 15 235.6 15.6 238.6" fill="none" stroke="#2b4c7c" stroke-width="1"/><rect x="21.9" y="241.5" width="8" height="7.800000000000001" rx="1.5" fill="#5c9a5c" stroke="#3f7842" stroke-width="1"/><rect x="22.9" y="244.5" width="6" height="1.8" fill="#fff"/><rect x="25.0" y="242.4" width="1.8" height="6" fill="#fff"/><path d="M35.4 235H44.2L39.8 240.1Z" fill="#000"/><circle cx="18.4" cy="267.8" r="10" fill="#b7cdea" stroke="#5f7fa8" stroke-width="1"/><path d="M12 262.4L15.4 261.6L16.6 264.2L14.2 266.6L12.6 265.6Z M19.6 261L24.6 262.6L25 266.4L22.4 268L20.2 266.2Z M15.6 268.6L19 269L19.4 273.4L17 276L15 273Z M23 270.2L25.6 270.6L24.4 273.6Z" fill="#2d4f7c"/><ellipse cx="18.4" cy="267.8" rx="4.6" ry="10" fill="none" stroke="#6b89b2" stroke-width="0.6"/><line x1="8.4" y1="267.8" x2="28.4" y2="267.8" stroke="#6b89b2" stroke-width="0.6"/><rect x="21.9" y="272.3" width="8" height="8" rx="1.5" fill="#5c9a5c" stroke="#3f7842" stroke-width="1"/><rect x="22.9" y="275.40000000000003" width="6" height="1.8" fill="#fff"/><rect x="25.0" y="273.3" width="1.8" height="6" fill="#fff"/><path d="M35.4 267.4H44.2L39.8 272.5Z" fill="#000"/><circle cx="18.6" cy="300.2" r="10" fill="#2c4d7a" stroke="#1f3558" stroke-width="1"/><ellipse cx="18.6" cy="300.2" rx="4.6" ry="10" fill="none" stroke="#c8d8ee" stroke-width="1.1"/><line x1="8.6" y1="296.6" x2="28.6" y2="296.6" stroke="#c8d8ee" stroke-width="1.1"/><line x1="8.6" y1="303.6" x2="28.6" y2="303.6" stroke="#c8d8ee" stroke-width="1.1"/><path d="M10 300H27.2" stroke="#7f9fcb" stroke-width="3"/><rect x="21.9" y="305.5" width="8" height="8" rx="1.5" fill="#5c9a5c" stroke="#3f7842" stroke-width="1"/><rect x="22.9" y="308.6" width="6" height="1.8" fill="#fff"/><rect x="25.0" y="306.5" width="1.8" height="6" fill="#fff"/><circle cx="18.4" cy="332" r="10.2" fill="#d9e6f6" stroke="#5d7fae" stroke-width="1.1"/><ellipse cx="18.4" cy="332" rx="4.8" ry="10.2" fill="none" stroke="#8eaad0" stroke-width="0.7"/><line x1="8.2" y1="328.6" x2="28.6" y2="328.6" stroke="#8eaad0" stroke-width="0.7"/><line x1="8.2" y1="335.4" x2="28.6" y2="335.4" stroke="#8eaad0" stroke-width="0.7"/><polyline points="12.8,327 16.8,337.4 21,327.2 25.4,327" fill="none" stroke="#2e3a48" stroke-width="1.2"/><circle cx="12.8" cy="327" r="1.3" fill="#f0f0f0" stroke="#2e3a48" stroke-width="1.1"/><circle cx="16.8" cy="337.4" r="1.3" fill="#f0f0f0" stroke="#2e3a48" stroke-width="1.1"/><circle cx="21" cy="327.2" r="1.3" fill="#f0f0f0" stroke="#2e3a48" stroke-width="1.1"/><circle cx="25.4" cy="327" r="1.3" fill="#f0f0f0" stroke="#2e3a48" stroke-width="1.1"/><rect x="21.9" y="336.5" width="8" height="8" rx="1.5" fill="#5c9a5c" stroke="#3f7842" stroke-width="1"/><rect x="22.9" y="339.6" width="6" height="1.8" fill="#fff"/><rect x="25.0" y="337.5" width="1.8" height="6" fill="#fff"/><path d="M35.4 331H44.2L39.8 336.1Z" fill="#000"/><path d="M17.6 356.2C21.6 356.2 23.6 359 23.2 362.4C22.6 366.8 19 370.6 13.2 372.4L12.6 371C15.8 369.4 17.4 367.6 17.8 365.6C15.2 365.6 13.4 363.8 13.4 361C13.4 358 15.4 356.2 17.6 356.2Z" fill="#5a86be" stroke="#466fa4" stroke-width="0.6"/><rect x="21.9" y="368.9" width="8" height="7.6" rx="1.5" fill="#5c9a5c" stroke="#3f7842" stroke-width="1"/><rect x="22.9" y="371.8" width="6" height="1.8" fill="#fff"/><rect x="25.0" y="369.7" width="1.8" height="6" fill="#fff"/><rect x="8.4" y="387.4" width="20" height="19.2" rx="1.5" fill="#b9c9dc" stroke="#7f8fa4" stroke-width="1"/><polyline points="10.4,389.6 15.2,403.4 20.2,389.6 26.2,389.6" fill="none" stroke="#3e4c5c" stroke-width="1.2"/><circle cx="10.4" cy="389.6" r="1.5" fill="#f0f0f0" stroke="#3e4c5c" stroke-width="1.1"/><circle cx="15.2" cy="403.4" r="1.5" fill="#f0f0f0" stroke="#3e4c5c" stroke-width="1.1"/><circle cx="20.2" cy="389.6" r="1.5" fill="#f0f0f0" stroke="#3e4c5c" stroke-width="1.1"/><circle cx="26.2" cy="389.6" r="1.5" fill="#f0f0f0" stroke="#3e4c5c" stroke-width="1.1"/><rect x="21.9" y="400.1" width="8" height="7.800000000000001" rx="1.5" fill="#5c9a5c" stroke="#3f7842" stroke-width="1"/><rect x="22.9" y="403.1" width="6" height="1.8" fill="#fff"/><rect x="25.0" y="401.0" width="1.8" height="6" fill="#fff"/><polyline points="9.7,419.7 15.5,433.8 22.1,419.7 27.9,419.7" fill="none" stroke="#3c4a5a" stroke-width="1.2"/><circle cx="9.7" cy="419.7" r="1.9" fill="#f0f0f0" stroke="#3c4a5a" stroke-width="1.1"/><circle cx="15.5" cy="433.8" r="1.9" fill="#f0f0f0" stroke="#3c4a5a" stroke-width="1.1"/><circle cx="22.1" cy="419.7" r="1.9" fill="#f0f0f0" stroke="#3c4a5a" stroke-width="1.1"/><circle cx="27.9" cy="419.7" r="1.9" fill="#f0f0f0" stroke="#3c4a5a" stroke-width="1.1"/><rect x="21.7" y="432.2" width="7.9" height="7.4" rx="1.5" fill="#dcb324" stroke="#c29a14" stroke-width="1"/><circle cx="25.65" cy="435.9" r="1.49" fill="none" stroke="#fff3b0" stroke-width="1.2"/><line x1="27.93" y1="435.90" x2="29.01" y2="435.90" stroke="#fff3b0" stroke-width="1.1"/><line x1="27.26" y1="437.51" x2="28.03" y2="438.28" stroke="#fff3b0" stroke-width="1.1"/><line x1="25.65" y1="438.18" x2="25.65" y2="439.26" stroke="#fff3b0" stroke-width="1.1"/><line x1="24.04" y1="437.51" x2="23.27" y2="438.28" stroke="#fff3b0" stroke-width="1.1"/><line x1="23.37" y1="435.90" x2="22.29" y2="435.90" stroke="#fff3b0" stroke-width="1.1"/><line x1="24.04" y1="434.29" x2="23.27" y2="433.52" stroke="#fff3b0" stroke-width="1.1"/><line x1="25.65" y1="433.62" x2="25.65" y2="432.54" stroke="#fff3b0" stroke-width="1.1"/><line x1="27.26" y1="434.29" x2="28.03" y2="433.52" stroke="#fff3b0" stroke-width="1.1"/><path d="M35.4 425.9H44.2L39.8 431.09999999999997Z" fill="#000"/><rect x="5.8" y="455.0" width="1.6" height="1.6" fill="#ffffff"/><rect x="5" y="454.2" width="1.6" height="1.6" fill="#b8b8b8"/><rect x="8.6" y="458.0" width="1.6" height="1.6" fill="#ffffff"/><rect x="7.8" y="457.2" width="1.6" height="1.6" fill="#b8b8b8"/><rect x="11.4" y="455.0" width="1.6" height="1.6" fill="#ffffff"/><rect x="10.6" y="454.2" width="1.6" height="1.6" fill="#b8b8b8"/><rect x="14.2" y="458.0" width="1.6" height="1.6" fill="#ffffff"/><rect x="13.399999999999999" y="457.2" width="1.6" height="1.6" fill="#b8b8b8"/><rect x="17.0" y="455.0" width="1.6" height="1.6" fill="#ffffff"/><rect x="16.2" y="454.2" width="1.6" height="1.6" fill="#b8b8b8"/><rect x="19.8" y="458.0" width="1.6" height="1.6" fill="#ffffff"/><rect x="19.0" y="457.2" width="1.6" height="1.6" fill="#b8b8b8"/><rect x="22.6" y="455.0" width="1.6" height="1.6" fill="#ffffff"/><rect x="21.8" y="454.2" width="1.6" height="1.6" fill="#b8b8b8"/><rect x="25.400000000000002" y="458.0" width="1.6" height="1.6" fill="#ffffff"/><rect x="24.6" y="457.2" width="1.6" height="1.6" fill="#b8b8b8"/><rect x="28.200000000000003" y="455.0" width="1.6" height="1.6" fill="#ffffff"/><rect x="27.400000000000002" y="454.2" width="1.6" height="1.6" fill="#b8b8b8"/><rect x="31.000000000000004" y="458.0" width="1.6" height="1.6" fill="#ffffff"/><rect x="30.200000000000003" y="457.2" width="1.6" height="1.6" fill="#b8b8b8"/><rect x="33.8" y="455.0" width="1.6" height="1.6" fill="#ffffff"/><rect x="33.0" y="454.2" width="1.6" height="1.6" fill="#b8b8b8"/><rect x="36.599999999999994" y="458.0" width="1.6" height="1.6" fill="#ffffff"/><rect x="35.8" y="457.2" width="1.6" height="1.6" fill="#b8b8b8"/><rect x="39.39999999999999" y="455.0" width="1.6" height="1.6" fill="#ffffff"/><rect x="38.599999999999994" y="454.2" width="1.6" height="1.6" fill="#b8b8b8"/><rect x="42.19999999999999" y="458.0" width="1.6" height="1.6" fill="#ffffff"/><rect x="41.39999999999999" y="457.2" width="1.6" height="1.6" fill="#b8b8b8"/><rect x="51.8" y="123.39999999999999" width="1.6" height="1.6" fill="#ffffff"/><rect x="51" y="122.6" width="1.6" height="1.6" fill="#b8b8b8"/><rect x="54.599999999999994" y="126.39999999999999" width="1.6" height="1.6" fill="#ffffff"/><rect x="53.8" y="125.6" width="1.6" height="1.6" fill="#b8b8b8"/><rect x="57.39999999999999" y="123.39999999999999" width="1.6" height="1.6" fill="#ffffff"/><rect x="56.599999999999994" y="122.6" width="1.6" height="1.6" fill="#b8b8b8"/><rect x="60.19999999999999" y="126.39999999999999" width="1.6" height="1.6" fill="#ffffff"/><rect x="59.39999999999999" y="125.6" width="1.6" height="1.6" fill="#b8b8b8"/><rect x="62.999999999999986" y="123.39999999999999" width="1.6" height="1.6" fill="#ffffff"/><rect x="62.19999999999999" y="122.6" width="1.6" height="1.6" fill="#b8b8b8"/><rect x="65.79999999999998" y="126.39999999999999" width="1.6" height="1.6" fill="#ffffff"/><rect x="64.99999999999999" y="125.6" width="1.6" height="1.6" fill="#b8b8b8"/><rect x="68.59999999999998" y="123.39999999999999" width="1.6" height="1.6" fill="#ffffff"/><rect x="67.79999999999998" y="122.6" width="1.6" height="1.6" fill="#b8b8b8"/><rect x="71.39999999999998" y="126.39999999999999" width="1.6" height="1.6" fill="#ffffff"/><rect x="70.59999999999998" y="125.6" width="1.6" height="1.6" fill="#b8b8b8"/><rect x="74.19999999999997" y="123.39999999999999" width="1.6" height="1.6" fill="#ffffff"/><rect x="73.39999999999998" y="122.6" width="1.6" height="1.6" fill="#b8b8b8"/><rect x="76.99999999999997" y="126.39999999999999" width="1.6" height="1.6" fill="#ffffff"/><rect x="76.19999999999997" y="125.6" width="1.6" height="1.6" fill="#b8b8b8"/><rect x="79.79999999999997" y="123.39999999999999" width="1.6" height="1.6" fill="#ffffff"/><rect x="78.99999999999997" y="122.6" width="1.6" height="1.6" fill="#b8b8b8"/><rect x="82.59999999999997" y="126.39999999999999" width="1.6" height="1.6" fill="#ffffff"/><rect x="81.79999999999997" y="125.6" width="1.6" height="1.6" fill="#b8b8b8"/><rect x="85.39999999999996" y="123.39999999999999" width="1.6" height="1.6" fill="#ffffff"/><rect x="84.59999999999997" y="122.6" width="1.6" height="1.6" fill="#b8b8b8"/><rect x="88.19999999999996" y="126.39999999999999" width="1.6" height="1.6" fill="#ffffff"/><rect x="87.39999999999996" y="125.6" width="1.6" height="1.6" fill="#b8b8b8"/><rect x="90.99999999999996" y="123.39999999999999" width="1.6" height="1.6" fill="#ffffff"/><rect x="90.19999999999996" y="122.6" width="1.6" height="1.6" fill="#b8b8b8"/><rect x="93.79999999999995" y="126.39999999999999" width="1.6" height="1.6" fill="#ffffff"/><rect x="92.99999999999996" y="125.6" width="1.6" height="1.6" fill="#b8b8b8"/><rect x="96.59999999999995" y="123.39999999999999" width="1.6" height="1.6" fill="#ffffff"/><rect x="95.79999999999995" y="122.6" width="1.6" height="1.6" fill="#b8b8b8"/><rect x="99.39999999999995" y="126.39999999999999" width="1.6" height="1.6" fill="#ffffff"/><rect x="98.59999999999995" y="125.6" width="1.6" height="1.6" fill="#b8b8b8"/><rect x="102.19999999999995" y="123.39999999999999" width="1.6" height="1.6" fill="#ffffff"/><rect x="101.39999999999995" y="122.6" width="1.6" height="1.6" fill="#b8b8b8"/><rect x="104.99999999999994" y="126.39999999999999" width="1.6" height="1.6" fill="#ffffff"/><rect x="104.19999999999995" y="125.6" width="1.6" height="1.6" fill="#b8b8b8"/><rect x="107.79999999999994" y="123.39999999999999" width="1.6" height="1.6" fill="#ffffff"/><rect x="106.99999999999994" y="122.6" width="1.6" height="1.6" fill="#b8b8b8"/><rect x="110.59999999999994" y="126.39999999999999" width="1.6" height="1.6" fill="#ffffff"/><rect x="109.79999999999994" y="125.6" width="1.6" height="1.6" fill="#b8b8b8"/><rect x="113.39999999999993" y="123.39999999999999" width="1.6" height="1.6" fill="#ffffff"/><rect x="112.59999999999994" y="122.6" width="1.6" height="1.6" fill="#b8b8b8"/><rect x="116.19999999999993" y="126.39999999999999" width="1.6" height="1.6" fill="#ffffff"/><rect x="115.39999999999993" y="125.6" width="1.6" height="1.6" fill="#b8b8b8"/><rect x="118.99999999999993" y="123.39999999999999" width="1.6" height="1.6" fill="#ffffff"/><rect x="118.19999999999993" y="122.6" width="1.6" height="1.6" fill="#b8b8b8"/><rect x="121.79999999999993" y="126.39999999999999" width="1.6" height="1.6" fill="#ffffff"/><rect x="120.99999999999993" y="125.6" width="1.6" height="1.6" fill="#b8b8b8"/><rect x="124.59999999999992" y="123.39999999999999" width="1.6" height="1.6" fill="#ffffff"/><rect x="123.79999999999993" y="122.6" width="1.6" height="1.6" fill="#b8b8b8"/><rect x="127.39999999999992" y="126.39999999999999" width="1.6" height="1.6" fill="#ffffff"/><rect x="126.59999999999992" y="125.6" width="1.6" height="1.6" fill="#b8b8b8"/><rect x="130.19999999999993" y="123.39999999999999" width="1.6" height="1.6" fill="#ffffff"/><rect x="129.39999999999992" y="122.6" width="1.6" height="1.6" fill="#b8b8b8"/><rect x="132.99999999999994" y="126.39999999999999" width="1.6" height="1.6" fill="#ffffff"/><rect x="132.19999999999993" y="125.6" width="1.6" height="1.6" fill="#b8b8b8"/><rect x="135.79999999999995" y="123.39999999999999" width="1.6" height="1.6" fill="#ffffff"/><rect x="134.99999999999994" y="122.6" width="1.6" height="1.6" fill="#b8b8b8"/><rect x="138.59999999999997" y="126.39999999999999" width="1.6" height="1.6" fill="#ffffff"/><rect x="137.79999999999995" y="125.6" width="1.6" height="1.6" fill="#b8b8b8"/><rect x="141.39999999999998" y="123.39999999999999" width="1.6" height="1.6" fill="#ffffff"/><rect x="140.59999999999997" y="122.6" width="1.6" height="1.6" fill="#b8b8b8"/><rect x="144.2" y="126.39999999999999" width="1.6" height="1.6" fill="#ffffff"/><rect x="143.39999999999998" y="125.6" width="1.6" height="1.6" fill="#b8b8b8"/><rect x="205.8" y="123.39999999999999" width="1.6" height="1.6" fill="#ffffff"/><rect x="205" y="122.6" width="1.6" height="1.6" fill="#b8b8b8"/><rect x="208.60000000000002" y="126.39999999999999" width="1.6" height="1.6" fill="#ffffff"/><rect x="207.8" y="125.6" width="1.6" height="1.6" fill="#b8b8b8"/><rect x="211.40000000000003" y="123.39999999999999" width="1.6" height="1.6" fill="#ffffff"/><rect x="210.60000000000002" y="122.6" width="1.6" height="1.6" fill="#b8b8b8"/><rect x="214.20000000000005" y="126.39999999999999" width="1.6" height="1.6" fill="#ffffff"/><rect x="213.40000000000003" y="125.6" width="1.6" height="1.6" fill="#b8b8b8"/><rect x="217.00000000000006" y="123.39999999999999" width="1.6" height="1.6" fill="#ffffff"/><rect x="216.20000000000005" y="122.6" width="1.6" height="1.6" fill="#b8b8b8"/><rect x="219.80000000000007" y="126.39999999999999" width="1.6" height="1.6" fill="#ffffff"/><rect x="219.00000000000006" y="125.6" width="1.6" height="1.6" fill="#b8b8b8"/><rect x="222.60000000000008" y="123.39999999999999" width="1.6" height="1.6" fill="#ffffff"/><rect x="221.80000000000007" y="122.6" width="1.6" height="1.6" fill="#b8b8b8"/><rect x="225.4000000000001" y="126.39999999999999" width="1.6" height="1.6" fill="#ffffff"/><rect x="224.60000000000008" y="125.6" width="1.6" height="1.6" fill="#b8b8b8"/><rect x="228.2000000000001" y="123.39999999999999" width="1.6" height="1.6" fill="#ffffff"/><rect x="227.4000000000001" y="122.6" width="1.6" height="1.6" fill="#b8b8b8"/><rect x="231.0000000000001" y="126.39999999999999" width="1.6" height="1.6" fill="#ffffff"/><rect x="230.2000000000001" y="125.6" width="1.6" height="1.6" fill="#b8b8b8"/><rect x="233.80000000000013" y="123.39999999999999" width="1.6" height="1.6" fill="#ffffff"/><rect x="233.0000000000001" y="122.6" width="1.6" height="1.6" fill="#b8b8b8"/><rect x="236.60000000000014" y="126.39999999999999" width="1.6" height="1.6" fill="#ffffff"/><rect x="235.80000000000013" y="125.6" width="1.6" height="1.6" fill="#b8b8b8"/><rect x="239.40000000000015" y="123.39999999999999" width="1.6" height="1.6" fill="#ffffff"/><rect x="238.60000000000014" y="122.6" width="1.6" height="1.6" fill="#b8b8b8"/><rect x="242.20000000000016" y="126.39999999999999" width="1.6" height="1.6" fill="#ffffff"/><rect x="241.40000000000015" y="125.6" width="1.6" height="1.6" fill="#b8b8b8"/><rect x="245.00000000000017" y="123.39999999999999" width="1.6" height="1.6" fill="#ffffff"/><rect x="244.20000000000016" y="122.6" width="1.6" height="1.6" fill="#b8b8b8"/><rect x="247.80000000000018" y="126.39999999999999" width="1.6" height="1.6" fill="#ffffff"/><rect x="247.00000000000017" y="125.6" width="1.6" height="1.6" fill="#b8b8b8"/><rect x="250.6000000000002" y="123.39999999999999" width="1.6" height="1.6" fill="#ffffff"/><rect x="249.80000000000018" y="122.6" width="1.6" height="1.6" fill="#b8b8b8"/><rect x="253.4000000000002" y="126.39999999999999" width="1.6" height="1.6" fill="#ffffff"/><rect x="252.6000000000002" y="125.6" width="1.6" height="1.6" fill="#b8b8b8"/><rect x="256.2000000000002" y="123.39999999999999" width="1.6" height="1.6" fill="#ffffff"/><rect x="255.4000000000002" y="122.6" width="1.6" height="1.6" fill="#b8b8b8"/><rect x="259.0000000000002" y="126.39999999999999" width="1.6" height="1.6" fill="#ffffff"/><rect x="258.2000000000002" y="125.6" width="1.6" height="1.6" fill="#b8b8b8"/><rect x="261.80000000000024" y="123.39999999999999" width="1.6" height="1.6" fill="#ffffff"/><rect x="261.0000000000002" y="122.6" width="1.6" height="1.6" fill="#b8b8b8"/><rect x="264.60000000000025" y="126.39999999999999" width="1.6" height="1.6" fill="#ffffff"/><rect x="263.80000000000024" y="125.6" width="1.6" height="1.6" fill="#b8b8b8"/><rect x="267.40000000000026" y="123.39999999999999" width="1.6" height="1.6" fill="#ffffff"/><rect x="266.60000000000025" y="122.6" width="1.6" height="1.6" fill="#b8b8b8"/><rect x="270.2000000000003" y="126.39999999999999" width="1.6" height="1.6" fill="#ffffff"/><rect x="269.40000000000026" y="125.6" width="1.6" height="1.6" fill="#b8b8b8"/><rect x="273.0000000000003" y="123.39999999999999" width="1.6" height="1.6" fill="#ffffff"/><rect x="272.2000000000003" y="122.6" width="1.6" height="1.6" fill="#b8b8b8"/><rect x="275.8000000000003" y="126.39999999999999" width="1.6" height="1.6" fill="#ffffff"/><rect x="275.0000000000003" y="125.6" width="1.6" height="1.6" fill="#b8b8b8"/><rect x="278.6000000000003" y="123.39999999999999" width="1.6" height="1.6" fill="#ffffff"/><rect x="277.8000000000003" y="122.6" width="1.6" height="1.6" fill="#b8b8b8"/><rect x="281.4000000000003" y="126.39999999999999" width="1.6" height="1.6" fill="#ffffff"/><rect x="280.6000000000003" y="125.6" width="1.6" height="1.6" fill="#b8b8b8"/><rect x="284.20000000000033" y="123.39999999999999" width="1.6" height="1.6" fill="#ffffff"/><rect x="283.4000000000003" y="122.6" width="1.6" height="1.6" fill="#b8b8b8"/><rect x="287.00000000000034" y="126.39999999999999" width="1.6" height="1.6" fill="#ffffff"/><rect x="286.20000000000033" y="125.6" width="1.6" height="1.6" fill="#b8b8b8"/><rect x="289.80000000000035" y="123.39999999999999" width="1.6" height="1.6" fill="#ffffff"/><rect x="289.00000000000034" y="122.6" width="1.6" height="1.6" fill="#b8b8b8"/><rect x="292.60000000000036" y="126.39999999999999" width="1.6" height="1.6" fill="#ffffff"/><rect x="291.80000000000035" y="125.6" width="1.6" height="1.6" fill="#b8b8b8"/><path d="M58 149.8L63.4 146L67.2 150.6L62.4 154.4Z" fill="#e35d3a" stroke="#b94426" stroke-width="0.6"/><path d="M59.6 148.2L63.2 145.8L64.6 147.6L60.8 150.2Z" fill="#6a8fd0"/><path d="M62.4 146.4L64.8 144.4L67.6 148.6L65.6 150.4Z" fill="#f6d24a"/><line x1="66" y1="148" x2="70.6" y2="143.6" stroke="#d89a3e" stroke-width="1.7" stroke-linecap="round"/><path d="M82.6 144.6V155.4H90" fill="none" stroke="#9a9a9a" stroke-width="1"/><rect x="84.6" y="143.2" width="9.4" height="10.8" fill="#f4f4f4" stroke="#8a8a8a" stroke-width="1"/><path d="M87.2 152V144.2A1.6 1.6 0 0 1 90.4 144.2V150.4" fill="none" stroke="#666" stroke-width="1"/><path d="M88.4 141.8V147" stroke="#777" stroke-width="0.8"/><rect x="90.1" y="150.7" width="5.8" height="5.2" rx="1.5" fill="#5ea35e" stroke="#4a8a4a" stroke-width="1"/><rect x="90.9" y="152.6" width="4.2" height="1.4" fill="#fff"/><rect x="92.3" y="151.2" width="1.4" height="4.2" fill="#fff"/><path d="M107.6 148.8Q114.6 141.6 121.8 148.8Q114.6 156 107.6 148.8Z" fill="#f4f6fa" stroke="#9aa4b2" stroke-width="0.9"/><circle cx="114.6" cy="148.6" r="3" fill="#6288b8" stroke="#4a6a94" stroke-width="0.6"/><circle cx="114.2" cy="148.4" r="0.9" fill="#1d2a3a"/><path d="M118.8 154.6H124.0L121.39999999999999 157.4Z" fill="#000"/><path d="M132.8 142.2H146L141 149V155.6H137.8V149Z" fill="#6c92c4" stroke="#5077aa" stroke-width="0.7"/><rect x="132.6" y="141.6" width="13.6" height="1.8" fill="#e8dc5a"/><rect x="133.4" y="143.4" width="12" height="1.4" fill="#8ab070"/><path d="M165.8 149.4H172.6V155.4H170.4V152.6L169.2 151.4L168.2 152.6V155.4H165.8Z" fill="#8e8e8e"/><path d="M177.9 146H186.9L182.4 151.2Z" fill="#000"/><path d="M197.6 142.6H195.8V154.6H197.6" fill="none" stroke="#a8a8a8" stroke-width="0.9"/><path d="M195.8 146H200M195.8 151.8H200" stroke="#a8a8a8" stroke-width="0.8"/><circle cx="199.6" cy="146.2" r="1.5" fill="#f0a040"/><circle cx="199.6" cy="152" r="1.5" fill="#f0a040"/><path d="M203.4 142.2H206V149.6H209L204.7 155L200.4 149.6H203.4Z" fill="#6a92c8" stroke="#4c75ad" stroke-width="0.6"/><path d="M223 142.6H221.2V154.6H223" fill="none" stroke="#a8a8a8" stroke-width="0.9"/><path d="M221.2 146H225.4M221.2 151.8H225.4" stroke="#a8a8a8" stroke-width="0.8"/><circle cx="225.2" cy="146.4" r="1.5" fill="#f0a040"/><circle cx="225.2" cy="152.2" r="1.5" fill="#f0a040"/><path d="M229 155H231.6V147.6H234.2L230.3 142.2L226.4 147.6H229Z" fill="#6a92c8" stroke="#4c75ad" stroke-width="0.6"/><rect x="246.4" y="143" width="10" height="10.2" fill="#f6f6f6" stroke="#8e8e8e" stroke-width="1"/><rect x="253.2" y="151.6" width="5.6" height="4" rx="1" fill="#e63e4e" stroke="#c0283a" stroke-width="0.6"/><rect x="254.4" y="153.2" width="3.2" height="0.9" fill="#fff"/><ellipse cx="680.8" cy="665.6" rx="4" ry="5.2" transform="rotate(-32 680.8 665.6)" fill="#fff" stroke="#111" stroke-width="1.3"/><path d="M678.4 662.6L681.6 667.4M680.2 661.8L683.2 666.4" stroke="#222" stroke-width="1"/><circle cx="684.4" cy="671.2" r="3.8" fill="#fff" stroke="#111" stroke-width="1.3"/><circle cx="684.2" cy="671.2" r="1.3" fill="#333"/><circle cx="687.6" cy="663.2" r="0.9" fill="#555"/><circle cx="689.4" cy="661.6" r="0.7" fill="#aaa"/><circle cx="676.4" cy="670.2" r="0.7" fill="#666"/><path d="M821.6 667V664.8A4 4 0 0 1 829.6 664.8V667" fill="none" stroke="#6e6e6e" stroke-width="1.8"/><rect x="819.6" y="666.6" width="12.4" height="8.8" rx="1" fill="#6e6e6e"/><path d="M948.1 659.5V678" stroke="#d0d0d0" stroke-width="1"/><path d="M948.6 668.2H961.6" stroke="#d8d8d8" stroke-width="1"/><path d="M951.2 665H959.0L955.1 661.4Z" fill="#000"/><path d="M951.2 672H959.0L955.1 675.6Z" fill="#000"/><path d="M1075.5 659.5V678" stroke="#d0d0d0" stroke-width="1"/><path d="M1076 668.2H1089" stroke="#d8d8d8" stroke-width="1"/><path d="M1078.6 665H1086.4L1082.5 661.4Z" fill="#000"/><path d="M1078.6 672H1086.4L1082.5 675.6Z" fill="#000"/><rect x="1096.6" y="662" width="11" height="11" fill="#fff" stroke="#5a5a5a" stroke-width="1"/><path d="M1099.2 664.6L1105 670.4M1105 664.6L1099.2 670.4" stroke="#000" stroke-width="2.2"/><circle cx="1169.8" cy="668.4" r="6.8" fill="#8c8c8c"/><circle cx="1169.8" cy="668.4" r="3.4" fill="none" stroke="#d4d4d4" stroke-width="1.1"/><path d="M1169.8 662.4V674.4M1163.8 668.4H1175.8" stroke="#cfcfcf" stroke-width="1"/><path d="M1259 661.8C1263.4 661.8 1266.6 664.4 1266.6 667.8C1266.6 670.6 1264.6 672.6 1262 673.4L1264.6 676L1259.2 673.8C1254.6 673.8 1251.4 671.2 1251.4 667.8C1251.4 664.4 1254.6 661.8 1259 661.8Z" fill="#5c5c5c"/><circle cx="1255.6" cy="667.8" r="1.1" fill="#fff"/><circle cx="1259" cy="667.8" r="1.1" fill="#fff"/><circle cx="1262.4" cy="667.8" r="1.1" fill="#fff"/><ellipse cx="9.2" cy="10.8" rx="4.9" ry="6.4" fill="#e4ee8c"/><ellipse cx="7" cy="9.4" rx="2.4" ry="3.8" fill="#f2f2b4"/><ellipse cx="11.4" cy="12.4" rx="2.8" ry="4.6" fill="#c8e25a"/><path d="M5.8 14.4C8 10 10.6 6 13.2 3.4L15 4.6C12.4 7.6 9.6 11 7.4 15Z" fill="#1c7c1c"/><path d="M3 14.2L6.4 14L7.4 15.8L5.2 16.2Z" fill="#263a1e"/><rect x="326.5" y="293.5" width="1.6" height="1.6" fill="#b4b4b4"/><rect x="326.5" y="298.0" width="1.6" height="1.6" fill="#b4b4b4"/><rect x="326.5" y="302.5" width="1.6" height="1.6" fill="#b4b4b4"/><rect x="326.5" y="307.0" width="1.6" height="1.6" fill="#b4b4b4"/><rect x="326.5" y="311.5" width="1.6" height="1.6" fill="#b4b4b4"/><rect x="326.5" y="316.0" width="1.6" height="1.6" fill="#b4b4b4"/><rect x="326.5" y="320.5" width="1.6" height="1.6" fill="#b4b4b4"/><rect x="326.5" y="325.0" width="1.6" height="1.6" fill="#b4b4b4"/><rect x="326.5" y="329.5" width="1.6" height="1.6" fill="#b4b4b4"/><rect x="326.5" y="334.0" width="1.6" height="1.6" fill="#b4b4b4"/><rect x="326.5" y="338.5" width="1.6" height="1.6" fill="#b4b4b4"/><rect x="326.5" y="343.0" width="1.6" height="1.6" fill="#b4b4b4"/><rect x="326.5" y="347.5" width="1.6" height="1.6" fill="#b4b4b4"/><rect x="326.5" y="352.0" width="1.6" height="1.6" fill="#b4b4b4"/><rect x="326.5" y="356.5" width="1.6" height="1.6" fill="#b4b4b4"/><rect x="326.5" y="361.0" width="1.6" height="1.6" fill="#b4b4b4"/><rect x="326.5" y="365.5" width="1.6" height="1.6" fill="#b4b4b4"/><rect x="326.5" y="370.0" width="1.6" height="1.6" fill="#b4b4b4"/><rect x="326.5" y="374.5" width="1.6" height="1.6" fill="#b4b4b4"/><rect x="326.5" y="379.0" width="1.6" height="1.6" fill="#b4b4b4"/><rect x="326.5" y="383.5" width="1.6" height="1.6" fill="#b4b4b4"/><rect x="326.5" y="388.0" width="1.6" height="1.6" fill="#b4b4b4"/><rect x="326.5" y="392.5" width="1.6" height="1.6" fill="#b4b4b4"/><rect x="326.5" y="397.0" width="1.6" height="1.6" fill="#b4b4b4"/><rect x="326.5" y="401.5" width="1.6" height="1.6" fill="#b4b4b4"/><rect x="326.5" y="406.0" width="1.6" height="1.6" fill="#b4b4b4"/><rect x="326.5" y="410.5" width="1.6" height="1.6" fill="#b4b4b4"/><rect x="326.5" y="415.0" width="1.6" height="1.6" fill="#b4b4b4"/><rect x="326.5" y="419.5" width="1.6" height="1.6" fill="#b4b4b4"/><rect x="326.5" y="424.0" width="1.6" height="1.6" fill="#b4b4b4"/><rect x="326.5" y="428.5" width="1.6" height="1.6" fill="#b4b4b4"/><rect x="326.5" y="433.0" width="1.6" height="1.6" fill="#b4b4b4"/><rect x="326.5" y="437.5" width="1.6" height="1.6" fill="#b4b4b4"/><rect x="326.5" y="442.0" width="1.6" height="1.6" fill="#b4b4b4"/><rect x="326.5" y="446.5" width="1.6" height="1.6" fill="#b4b4b4"/><rect x="326.5" y="451.0" width="1.6" height="1.6" fill="#b4b4b4"/><rect x="326.5" y="455.5" width="1.6" height="1.6" fill="#b4b4b4"/><rect x="326.5" y="460.0" width="1.6" height="1.6" fill="#b4b4b4"/><rect x="326.5" y="464.5" width="1.6" height="1.6" fill="#b4b4b4"/><rect x="326.5" y="469.0" width="1.6" height="1.6" fill="#b4b4b4"/><path d="M831.0 54.456C828.8 52.368 823.0 52.6 823.1999999999999 55.616C823.4 57.704 825.8 58.4 828.0 58.4C824.8 58.4 822.1999999999999 59.328 822.4 61.416C822.5999999999999 64.432 829.0 64.432 831.4 62.344" fill="none" stroke="#5c3d80" stroke-width="1.6" stroke-linecap="round"/><path d="M165.64 144.344C164.1 142.832 160.04 143.0 160.17999999999998 145.184C160.32 146.696 162.0 147.2 163.54 147.2C161.29999999999998 147.2 159.48 147.872 159.61999999999998 149.38400000000001C159.76 151.568 164.23999999999998 151.568 165.92 150.056" fill="none" stroke="#5c3d80" stroke-width="1.3" stroke-linecap="round"/></svg>
</div></body></html>
